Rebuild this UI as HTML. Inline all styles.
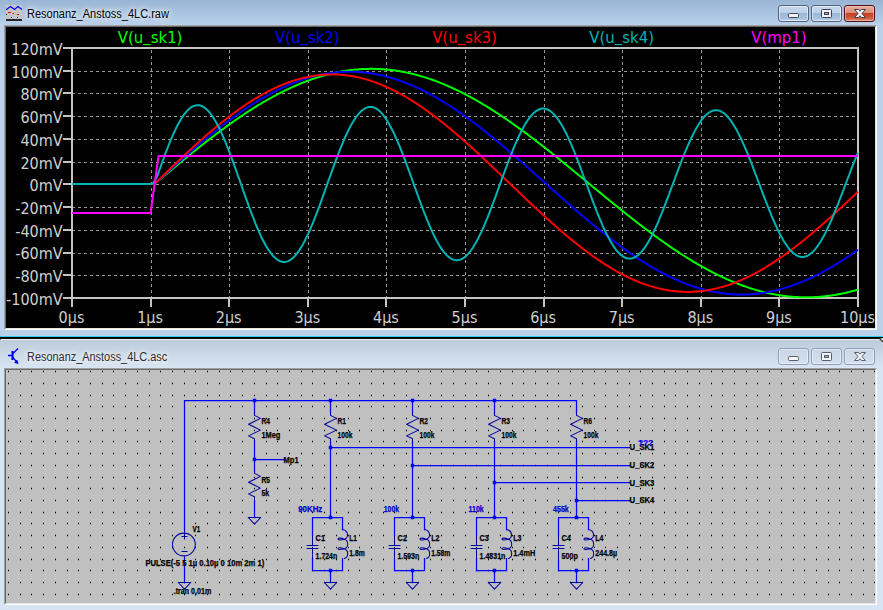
<!DOCTYPE html>
<html lang="de"><head><meta charset="utf-8"><title>LTspice</title>
<style>
html,body{margin:0;padding:0}
body{width:883px;height:610px;overflow:hidden;position:relative;background:#b9d1ea;font-family:"Liberation Sans",sans-serif}
.win{position:absolute;left:0;width:883px;overflow:hidden}
#w1{top:0;height:338px;background:#b9d1ea}
#w2{top:338px;height:272px;background:#d7e4f2}
.tb{position:absolute;left:0;top:0;width:883px}
#w1 .tb{height:25px;background:linear-gradient(#9ab5d5,#b9d1ea)}
#w2 .tb{top:0;height:30px;background:linear-gradient(#1a0a05 0,#1a0a05 1px,#e6edf7 1px,#e6edf7 2px,#bccbdb 2px,#d9e5f2 30px)}
.ttl{position:absolute;left:26.5px;font-size:12px;line-height:14px;color:#000;white-space:nowrap;text-shadow:0 0 5px #fff,0 0 8px #fff;transform:scaleX(.917);transform-origin:0 0}
.client{position:absolute;left:4px;width:869px;border-style:solid;border-width:2px;border-color:#a0a0a0 #fff #fff #a0a0a0}
.client i{position:absolute;left:0;top:0;right:0;bottom:0;border-style:solid;border-width:1px;border-color:#696969 #e3e3e3 #e3e3e3 #696969;margin:-1px}
.btn{position:absolute;width:29px;height:15px;border:1px solid #52627d;border-radius:3px;box-shadow:inset 0 0 0 1px rgba(255,255,255,.55)}
#w1 .btn{top:5px;background:linear-gradient(#c3d6ec 0,#bdd2ea 45%,#9cb7d6 50%,#a9c2df 85%,#bcd2eb 100%)}
#w1 .btn.cl{background:linear-gradient(#e9aa9b 0,#dd8f7c 45%,#c4411f 50%,#cf5a3c 80%,#dc8d74 100%);border-color:#4b0f1e;box-shadow:inset 0 0 0 1px rgba(255,220,210,.5)}
#w2 .btn{top:10px;border-color:#8e9fbe;background:linear-gradient(#c9d6e5,#d5e0ee);box-shadow:inset 0 0 0 1px rgba(255,255,255,.45)}
.b1{left:778px}.b2{left:811px}.b3{left:844px}
.btn svg{position:absolute;left:0;top:0}
svg text{white-space:pre}
</style></head><body>

<div class="win" id="w1"><div class="tb"></div>
<svg style="position:absolute;left:6px;top:5px" width="16" height="16" viewBox="0 0 16 16"><rect width="16" height="16" fill="#c6c6c6"/><path d="M0.5 4.5L4.5 1.5L8.5 4.5L12 1.5L16 4.5" fill="none" stroke="#0000ff" stroke-width="1.2"/><path d="M2 7.5h3M6.5 8.5h1.5M11 9.5h2" stroke="#ff0000" stroke-width="1.2"/><path d="M5 12.5h1M11 12.5h1" stroke="#000080" stroke-width="1.2"/><path d="M0 4.5h1M0 9.5h1" stroke="#000" /><path d="M0 15h16" stroke="#000" stroke-width="1.6"/></svg>
<div class="ttl" style="top:7px">Resonanz_Anstoss_4LC.raw</div>
<div class="btn b1"><svg width="29" height="15"><rect x="9.5" y="7.5" width="10" height="4" rx="1" fill="#f4f4f4" stroke="#3a3f55"/></svg></div>
<div class="btn b2"><svg width="29" height="15"><rect x="9.5" y="3.5" width="10" height="8" rx="1" fill="#f4f4f4" stroke="#3a3f55"/><rect x="12.5" y="6.5" width="4" height="2" fill="#9fb6d3" stroke="#3a3f55"/></svg></div>
<div class="btn b3 cl"><svg width="29" height="15"><path d="M9.5 3.500h4l1.500 1.700l1.500-1.700h4l-3.600 4l3.600 4h-4l-1.500-1.700l-1.500 1.700h-4l3.600-4z" fill="#f4f4f4" stroke="#3a3f55" stroke-width="1" stroke-linejoin="round"/></svg></div>
<div class="client" style="top:25px;height:301px;background:#000"><i></i></div>
<div style="position:absolute;left:0;top:336px;width:883px;height:1px;background:#2fd0ee"></div><div style="position:absolute;left:0;top:337px;width:883px;height:1px;background:#000"></div>
</div>
<div class="win" id="w2"><div class="tb"></div>
<svg style="position:absolute;left:7px;top:9px" width="14" height="18" viewBox="0 0 14 18"><path d="M1 8.5h4M5.5 4v9M5.5 7L11 1.500M5.500 10L11 16.500" fill="none" stroke="#0000ff" stroke-width="1.300"/><path d="M11 16.500L7.500 15.500L10 13z" fill="#0000ff" stroke="#0000ff" stroke-width=".6"/><path d="M5.500 4v9" stroke="#0000ff" stroke-width="2"/></svg>
<div class="ttl" style="top:12px;color:#2e2e2e;transform:scaleX(.91)">Resonanz_Anstoss_4LC.asc</div>
<div class="btn b1"><svg width="29" height="15"><rect x="9.5" y="7.5" width="10" height="4" rx="1" fill="#f4f4f4" stroke="#555d70"/></svg></div>
<div class="btn b2"><svg width="29" height="15"><rect x="9.5" y="3.5" width="10" height="8" rx="1" fill="#f4f4f4" stroke="#555d70"/><rect x="12.5" y="6.5" width="4" height="2" fill="#9fb6d3" stroke="#555d70"/></svg></div>
<div class="btn b3 cl"><svg width="29" height="15"><path d="M9.5 3.500h4l1.500 1.700l1.500-1.700h4l-3.600 4l3.600 4h-4l-1.500-1.700l-1.500 1.700h-4l3.600-4z" fill="#f4f4f4" stroke="#555d70" stroke-width="1" stroke-linejoin="round"/></svg></div>
<svg style="position:absolute;left:879px;top:0" width="4" height="5"><path d="M1.500 0H4V3.500z" fill="#c9d9ea"/><path d="M0.500 0.500L4 4" stroke="#4a4038" stroke-width="1.300" fill="none"/></svg><div style="position:absolute;left:0;top:1px;width:1px;height:1px;background:#7a7a7a"></div>
<div class="client" style="top:30px;height:233px;background:#c0c0c0"><i></i></div>
</div>
<svg style="position:absolute;left:0;top:0" width="883" height="338" viewBox="0 0 883 338" font-family="'DejaVu Sans Condensed','Liberation Sans',sans-serif">
<path d="M151.5 50V297M229.5 50V297M308.5 50V297M386.5 50V297M465.5 50V297M544.5 50V297M622.5 50V297M701.5 50V297M779.5 50V297M72 71.5H857M72 93.5H857M72 116.5H857M72 139.5H857M72 162.5H857M72 184.5H857M72 207.5H857M72 230.5H857M72 253.5H857M72 275.5H857" stroke="#989898" stroke-width="1" stroke-dasharray="3 3" fill="none" shape-rendering="crispEdges"/>
<rect x="72" y="48" width="786" height="250" fill="none" stroke="#c4c4c4" stroke-width="2" shape-rendering="crispEdges"/>
<path d="M63 48H72M63 71H72M63 93H72M63 116H72M63 139H72M63 162H72M63 184H72M63 207H72M63 230H72M63 253H72M63 275H72M63 298H72M72 298V307M151 298V307M229 298V307M308 298V307M386 298V307M465 298V307M544 298V307M622 298V307M701 298V307M779 298V307M858 298V307" stroke="#c4c4c4" stroke-width="2" fill="none" shape-rendering="crispEdges"/>
<g>
<polyline points="72.0,184.0 72.8,184.0 73.6,184.0 74.4,184.0 75.1,184.0 75.9,184.0 76.7,184.0 77.5,184.0 78.3,184.0 79.1,184.0 79.9,184.0 80.6,184.0 81.4,184.0 82.2,184.0 83.0,184.0 83.8,184.0 84.6,184.0 85.4,184.0 86.1,184.0 86.9,184.0 87.7,184.0 88.5,184.0 89.3,184.0 90.1,184.0 90.9,184.0 91.7,184.0 92.4,184.0 93.2,184.0 94.0,184.0 94.8,184.0 95.6,184.0 96.4,184.0 97.2,184.0 97.9,184.0 98.7,184.0 99.5,184.0 100.3,184.0 101.1,184.0 101.9,184.0 102.7,184.0 103.4,184.0 104.2,184.0 105.0,184.0 105.8,184.0 106.6,184.0 107.4,184.0 108.2,184.0 108.9,184.0 109.7,184.0 110.5,184.0 111.3,184.0 112.1,184.0 112.9,184.0 113.7,184.0 114.4,184.0 115.2,184.0 116.0,184.0 116.8,184.0 117.6,184.0 118.4,184.0 119.2,184.0 119.9,184.0 120.7,184.0 121.5,184.0 122.3,184.0 123.1,184.0 123.9,184.0 124.7,184.0 125.4,184.0 126.2,184.0 127.0,184.0 127.8,184.0 128.6,184.0 129.4,184.0 130.2,184.0 130.9,184.0 131.7,184.0 132.5,184.0 133.3,184.0 134.1,184.0 134.9,184.0 135.7,184.0 136.5,184.0 137.2,184.0 138.0,184.0 138.8,184.0 139.6,184.0 140.4,184.0 141.2,184.0 142.0,184.0 142.7,184.0 143.5,184.0 144.3,184.0 145.1,184.0 145.9,184.0 146.7,184.0 147.5,184.0 148.2,184.0 149.0,184.0 149.8,184.0 150.6,184.0 151.4,184.0 152.2,183.9 153.0,183.7 153.7,183.5 154.5,183.2 155.3,182.8 156.1,182.4 156.9,181.9 157.7,181.3 158.5,180.7 159.2,180.1 160.0,179.4 160.8,178.7 161.6,178.1 162.4,177.4 163.2,176.8 164.0,176.1 164.7,175.4 165.5,174.8 166.3,174.1 167.1,173.5 167.9,172.8 168.7,172.2 169.5,171.5 170.2,170.9 171.0,170.2 171.8,169.6 172.6,168.9 173.4,168.2 174.2,167.6 175.0,166.9 175.8,166.3 176.5,165.6 177.3,165.0 178.1,164.3 178.9,163.7 179.7,163.0 180.5,162.4 181.3,161.8 182.0,161.1 182.8,160.5 183.6,159.8 184.4,159.2 185.2,158.5 186.0,157.9 186.8,157.3 187.5,156.6 188.3,156.0 189.1,155.3 189.9,154.7 190.7,154.1 191.5,153.4 192.3,152.8 193.0,152.2 193.8,151.5 194.6,150.9 195.4,150.3 196.2,149.7 197.0,149.0 197.8,148.4 198.5,147.8 199.3,147.2 200.1,146.5 200.9,145.9 201.7,145.3 202.5,144.7 203.3,144.1 204.0,143.4 204.8,142.8 205.6,142.2 206.4,141.6 207.2,141.0 208.0,140.4 208.8,139.8 209.6,139.2 210.3,138.6 211.1,138.0 211.9,137.4 212.7,136.8 213.5,136.2 214.3,135.6 215.1,135.0 215.8,134.4 216.6,133.8 217.4,133.2 218.2,132.6 219.0,132.0 219.8,131.4 220.6,130.8 221.3,130.3 222.1,129.7 222.9,129.1 223.7,128.5 224.5,128.0 225.3,127.4 226.1,126.8 226.8,126.2 227.6,125.7 228.4,125.1 229.2,124.5 230.0,124.0 230.8,123.4 231.6,122.9 232.3,122.3 233.1,121.8 233.9,121.2 234.7,120.7 235.5,120.1 236.3,119.6 237.1,119.0 237.8,118.5 238.6,117.9 239.4,117.4 240.2,116.9 241.0,116.3 241.8,115.8 242.6,115.3 243.3,114.8 244.1,114.2 244.9,113.7 245.7,113.2 246.5,112.7 247.3,112.2 248.1,111.7 248.8,111.1 249.6,110.6 250.4,110.1 251.2,109.6 252.0,109.1 252.8,108.6 253.6,108.1 254.4,107.6 255.1,107.2 255.9,106.7 256.7,106.2 257.5,105.7 258.3,105.2 259.1,104.7 259.9,104.3 260.6,103.8 261.4,103.3 262.2,102.9 263.0,102.4 263.8,101.9 264.6,101.5 265.4,101.0 266.1,100.6 266.9,100.1 267.7,99.7 268.5,99.2 269.3,98.8 270.1,98.3 270.9,97.9 271.6,97.5 272.4,97.0 273.2,96.6 274.0,96.2 274.8,95.8 275.6,95.3 276.4,94.9 277.1,94.5 277.9,94.1 278.7,93.7 279.5,93.3 280.3,92.9 281.1,92.5 281.9,92.1 282.6,91.7 283.4,91.3 284.2,90.9 285.0,90.5 285.8,90.2 286.6,89.8 287.4,89.4 288.1,89.0 288.9,88.7 289.7,88.3 290.5,87.9 291.3,87.6 292.1,87.2 292.9,86.9 293.7,86.5 294.4,86.2 295.2,85.8 296.0,85.5 296.8,85.1 297.6,84.8 298.4,84.5 299.2,84.1 299.9,83.8 300.7,83.5 301.5,83.2 302.3,82.9 303.1,82.6 303.9,82.2 304.7,81.9 305.4,81.6 306.2,81.3 307.0,81.0 307.8,80.8 308.6,80.5 309.4,80.2 310.2,79.9 310.9,79.6 311.7,79.3 312.5,79.1 313.3,78.8 314.1,78.5 314.9,78.3 315.7,78.0 316.4,77.8 317.2,77.5 318.0,77.3 318.8,77.0 319.6,76.8 320.4,76.5 321.2,76.3 321.9,76.1 322.7,75.9 323.5,75.6 324.3,75.4 325.1,75.2 325.9,75.0 326.7,74.8 327.4,74.6 328.2,74.4 329.0,74.2 329.8,74.0 330.6,73.8 331.4,73.6 332.2,73.4 333.0,73.2 333.7,73.1 334.5,72.9 335.3,72.7 336.1,72.5 336.9,72.4 337.7,72.2 338.5,72.1 339.2,71.9 340.0,71.8 340.8,71.6 341.6,71.5 342.4,71.3 343.2,71.2 344.0,71.1 344.7,70.9 345.5,70.8 346.3,70.7 347.1,70.6 347.9,70.5 348.7,70.4 349.5,70.3 350.2,70.2 351.0,70.1 351.8,70.0 352.6,69.9 353.4,69.8 354.2,69.7 355.0,69.6 355.7,69.6 356.5,69.5 357.3,69.4 358.1,69.4 358.9,69.3 359.7,69.2 360.5,69.2 361.2,69.1 362.0,69.1 362.8,69.0 363.6,69.0 364.4,69.0 365.2,68.9 366.0,68.9 366.8,68.9 367.5,68.9 368.3,68.9 369.1,68.8 369.9,68.8 370.7,68.8 371.5,68.8 372.3,68.8 373.0,68.8 373.8,68.8 374.6,68.9 375.4,68.9 376.2,68.9 377.0,68.9 377.8,69.0 378.5,69.0 379.3,69.0 380.1,69.1 380.9,69.1 381.7,69.2 382.5,69.2 383.3,69.3 384.0,69.3 384.8,69.4 385.6,69.4 386.4,69.5 387.2,69.6 388.0,69.7 388.8,69.7 389.5,69.8 390.3,69.9 391.1,70.0 391.9,70.1 392.7,70.2 393.5,70.3 394.3,70.4 395.0,70.5 395.8,70.6 396.6,70.7 397.4,70.9 398.2,71.0 399.0,71.1 399.8,71.2 400.5,71.4 401.3,71.5 402.1,71.7 402.9,71.8 403.7,72.0 404.5,72.1 405.3,72.3 406.1,72.4 406.8,72.6 407.6,72.8 408.4,72.9 409.2,73.1 410.0,73.3 410.8,73.5 411.6,73.7 412.3,73.8 413.1,74.0 413.9,74.2 414.7,74.4 415.5,74.6 416.3,74.8 417.1,75.0 417.8,75.3 418.6,75.5 419.4,75.7 420.2,75.9 421.0,76.2 421.8,76.4 422.6,76.6 423.3,76.9 424.1,77.1 424.9,77.3 425.7,77.6 426.5,77.8 427.3,78.1 428.1,78.4 428.8,78.6 429.6,78.9 430.4,79.1 431.2,79.4 432.0,79.7 432.8,80.0 433.6,80.3 434.3,80.5 435.1,80.8 435.9,81.1 436.7,81.4 437.5,81.7 438.3,82.0 439.1,82.3 439.8,82.6 440.6,82.9 441.4,83.3 442.2,83.6 443.0,83.9 443.8,84.2 444.6,84.5 445.4,84.9 446.1,85.2 446.9,85.5 447.7,85.9 448.5,86.2 449.3,86.6 450.1,86.9 450.9,87.3 451.6,87.6 452.4,88.0 453.2,88.4 454.0,88.7 454.8,89.1 455.6,89.5 456.4,89.8 457.1,90.2 457.9,90.6 458.7,91.0 459.5,91.4 460.3,91.7 461.1,92.1 461.9,92.5 462.6,92.9 463.4,93.3 464.2,93.7 465.0,94.1 465.8,94.6 466.6,95.0 467.4,95.4 468.1,95.8 468.9,96.2 469.7,96.6 470.5,97.1 471.3,97.5 472.1,97.9 472.9,98.4 473.6,98.8 474.4,99.2 475.2,99.7 476.0,100.1 476.8,100.6 477.6,101.0 478.4,101.5 479.1,101.9 479.9,102.4 480.7,102.9 481.5,103.3 482.3,103.8 483.1,104.3 483.9,104.7 484.6,105.2 485.4,105.7 486.2,106.2 487.0,106.6 487.8,107.1 488.6,107.6 489.4,108.1 490.2,108.6 490.9,109.1 491.7,109.6 492.5,110.1 493.3,110.6 494.1,111.1 494.9,111.6 495.7,112.1 496.4,112.6 497.2,113.1 498.0,113.6 498.8,114.2 499.6,114.7 500.4,115.2 501.2,115.7 501.9,116.2 502.7,116.8 503.5,117.3 504.3,117.8 505.1,118.4 505.9,118.9 506.7,119.4 507.4,120.0 508.2,120.5 509.0,121.1 509.8,121.6 510.6,122.2 511.4,122.7 512.2,123.3 512.9,123.8 513.7,124.4 514.5,124.9 515.3,125.5 516.1,126.1 516.9,126.6 517.7,127.2 518.4,127.8 519.2,128.3 520.0,128.9 520.8,129.5 521.6,130.0 522.4,130.6 523.2,131.2 524.0,131.8 524.7,132.4 525.5,132.9 526.3,133.5 527.1,134.1 527.9,134.7 528.7,135.3 529.5,135.9 530.2,136.5 531.0,137.1 531.8,137.6 532.6,138.2 533.4,138.8 534.2,139.4 535.0,140.0 535.7,140.6 536.5,141.2 537.3,141.9 538.1,142.5 538.9,143.1 539.7,143.7 540.5,144.3 541.2,144.9 542.0,145.5 542.8,146.1 543.6,146.7 544.4,147.4 545.2,148.0 546.0,148.6 546.7,149.2 547.5,149.8 548.3,150.4 549.1,151.1 549.9,151.7 550.7,152.3 551.5,152.9 552.2,153.6 553.0,154.2 553.8,154.8 554.6,155.5 555.4,156.1 556.2,156.7 557.0,157.4 557.7,158.0 558.5,158.6 559.3,159.3 560.1,159.9 560.9,160.5 561.7,161.2 562.5,161.8 563.2,162.4 564.0,163.1 564.8,163.7 565.6,164.4 566.4,165.0 567.2,165.6 568.0,166.3 568.8,166.9 569.5,167.6 570.3,168.2 571.1,168.8 571.9,169.5 572.7,170.1 573.5,170.8 574.3,171.4 575.0,172.1 575.8,172.7 576.6,173.4 577.4,174.0 578.2,174.7 579.0,175.3 579.8,175.9 580.5,176.6 581.3,177.2 582.1,177.9 582.9,178.5 583.7,179.2 584.5,179.8 585.3,180.5 586.0,181.1 586.8,181.8 587.6,182.4 588.4,183.1 589.2,183.7 590.0,184.4 590.8,185.0 591.5,185.7 592.3,186.3 593.1,187.0 593.9,187.6 594.7,188.3 595.5,188.9 596.3,189.6 597.0,190.2 597.8,190.9 598.6,191.5 599.4,192.1 600.2,192.8 601.0,193.4 601.8,194.1 602.5,194.7 603.3,195.4 604.1,196.0 604.9,196.7 605.7,197.3 606.5,198.0 607.3,198.6 608.1,199.2 608.8,199.9 609.6,200.5 610.4,201.2 611.2,201.8 612.0,202.4 612.8,203.1 613.6,203.7 614.3,204.4 615.1,205.0 615.9,205.6 616.7,206.3 617.5,206.9 618.3,207.5 619.1,208.2 619.8,208.8 620.6,209.4 621.4,210.1 622.2,210.7 623.0,211.3 623.8,211.9 624.6,212.6 625.3,213.2 626.1,213.8 626.9,214.4 627.7,215.1 628.5,215.7 629.3,216.3 630.1,216.9 630.8,217.5 631.6,218.2 632.4,218.8 633.2,219.4 634.0,220.0 634.8,220.6 635.6,221.2 636.3,221.8 637.1,222.5 637.9,223.1 638.7,223.7 639.5,224.3 640.3,224.9 641.1,225.5 641.9,226.1 642.6,226.7 643.4,227.3 644.2,227.9 645.0,228.5 645.8,229.1 646.6,229.7 647.4,230.2 648.1,230.8 648.9,231.4 649.7,232.0 650.5,232.6 651.3,233.2 652.1,233.8 652.9,234.3 653.6,234.9 654.4,235.5 655.2,236.1 656.0,236.6 656.8,237.2 657.6,237.8 658.4,238.4 659.1,238.9 659.9,239.5 660.7,240.0 661.5,240.6 662.3,241.2 663.1,241.7 663.9,242.3 664.6,242.8 665.4,243.4 666.2,243.9 667.0,244.5 667.8,245.0 668.6,245.6 669.4,246.1 670.1,246.6 670.9,247.2 671.7,247.7 672.5,248.3 673.3,248.8 674.1,249.3 674.9,249.8 675.6,250.4 676.4,250.9 677.2,251.4 678.0,251.9 678.8,252.4 679.6,253.0 680.4,253.5 681.1,254.0 681.9,254.5 682.7,255.0 683.5,255.5 684.3,256.0 685.1,256.5 685.9,257.0 686.7,257.5 687.4,258.0 688.2,258.4 689.0,258.9 689.8,259.4 690.6,259.9 691.4,260.4 692.2,260.9 692.9,261.3 693.7,261.8 694.5,262.3 695.3,262.7 696.1,263.2 696.9,263.7 697.7,264.1 698.4,264.6 699.2,265.0 700.0,265.5 700.8,265.9 701.6,266.4 702.4,266.8 703.2,267.2 703.9,267.7 704.7,268.1 705.5,268.5 706.3,269.0 707.1,269.4 707.9,269.8 708.7,270.2 709.4,270.7 710.2,271.1 711.0,271.5 711.8,271.9 712.6,272.3 713.4,272.7 714.2,273.1 714.9,273.5 715.7,273.9 716.5,274.3 717.3,274.7 718.1,275.1 718.9,275.4 719.7,275.8 720.5,276.2 721.2,276.6 722.0,276.9 722.8,277.3 723.6,277.7 724.4,278.0 725.2,278.4 726.0,278.7 726.7,279.1 727.5,279.4 728.3,279.8 729.1,280.1 729.9,280.5 730.7,280.8 731.5,281.1 732.2,281.5 733.0,281.8 733.8,282.1 734.6,282.5 735.4,282.8 736.2,283.1 737.0,283.4 737.7,283.7 738.5,284.0 739.3,284.3 740.1,284.6 740.9,284.9 741.7,285.2 742.5,285.5 743.2,285.8 744.0,286.1 744.8,286.3 745.6,286.6 746.4,286.9 747.2,287.1 748.0,287.4 748.7,287.7 749.5,287.9 750.3,288.2 751.1,288.4 751.9,288.7 752.7,288.9 753.5,289.2 754.2,289.4 755.0,289.6 755.8,289.9 756.6,290.1 757.4,290.3 758.2,290.6 759.0,290.8 759.8,291.0 760.5,291.2 761.3,291.4 762.1,291.6 762.9,291.8 763.7,292.0 764.5,292.2 765.3,292.4 766.0,292.6 766.8,292.8 767.6,292.9 768.4,293.1 769.2,293.3 770.0,293.5 770.8,293.6 771.5,293.8 772.3,293.9 773.1,294.1 773.9,294.2 774.7,294.4 775.5,294.5 776.3,294.7 777.0,294.8 777.8,295.0 778.6,295.1 779.4,295.2 780.2,295.3 781.0,295.4 781.8,295.6 782.5,295.7 783.3,295.8 784.1,295.9 784.9,296.0 785.7,296.1 786.5,296.2 787.3,296.3 788.0,296.4 788.8,296.4 789.6,296.5 790.4,296.6 791.2,296.7 792.0,296.7 792.8,296.8 793.5,296.9 794.3,296.9 795.1,297.0 795.9,297.0 796.7,297.1 797.5,297.1 798.3,297.2 799.0,297.2 799.8,297.2 800.6,297.2 801.4,297.3 802.2,297.3 803.0,297.3 803.8,297.3 804.6,297.3 805.3,297.3 806.1,297.3 806.9,297.3 807.7,297.3 808.5,297.3 809.3,297.3 810.1,297.3 810.8,297.3 811.6,297.3 812.4,297.2 813.2,297.2 814.0,297.2 814.8,297.1 815.6,297.1 816.3,297.0 817.1,297.0 817.9,296.9 818.7,296.9 819.5,296.8 820.3,296.8 821.1,296.7 821.8,296.6 822.6,296.6 823.4,296.5 824.2,296.4 825.0,296.3 825.8,296.2 826.6,296.1 827.3,296.0 828.1,295.9 828.9,295.8 829.7,295.7 830.5,295.6 831.3,295.5 832.1,295.4 832.8,295.3 833.6,295.1 834.4,295.0 835.2,294.9 836.0,294.8 836.8,294.6 837.6,294.5 838.4,294.3 839.1,294.2 839.9,294.0 840.7,293.9 841.5,293.7 842.3,293.5 843.1,293.4 843.9,293.2 844.6,293.0 845.4,292.9 846.2,292.7 847.0,292.5 847.8,292.3 848.6,292.1 849.4,291.9 850.1,291.7 850.9,291.5 851.7,291.3 852.5,291.1 853.3,290.9 854.1,290.7 854.9,290.5 855.6,290.2 856.4,290.0 857.2,289.8 858.0,289.5" fill="none" stroke="#00ff00" stroke-width="2" stroke-linejoin="round"/>
<polyline points="72.0,184.0 72.8,184.0 73.6,184.0 74.4,184.0 75.1,184.0 75.9,184.0 76.7,184.0 77.5,184.0 78.3,184.0 79.1,184.0 79.9,184.0 80.6,184.0 81.4,184.0 82.2,184.0 83.0,184.0 83.8,184.0 84.6,184.0 85.4,184.0 86.1,184.0 86.9,184.0 87.7,184.0 88.5,184.0 89.3,184.0 90.1,184.0 90.9,184.0 91.7,184.0 92.4,184.0 93.2,184.0 94.0,184.0 94.8,184.0 95.6,184.0 96.4,184.0 97.2,184.0 97.9,184.0 98.7,184.0 99.5,184.0 100.3,184.0 101.1,184.0 101.9,184.0 102.7,184.0 103.4,184.0 104.2,184.0 105.0,184.0 105.8,184.0 106.6,184.0 107.4,184.0 108.2,184.0 108.9,184.0 109.7,184.0 110.5,184.0 111.3,184.0 112.1,184.0 112.9,184.0 113.7,184.0 114.4,184.0 115.2,184.0 116.0,184.0 116.8,184.0 117.6,184.0 118.4,184.0 119.2,184.0 119.9,184.0 120.7,184.0 121.5,184.0 122.3,184.0 123.1,184.0 123.9,184.0 124.7,184.0 125.4,184.0 126.2,184.0 127.0,184.0 127.8,184.0 128.6,184.0 129.4,184.0 130.2,184.0 130.9,184.0 131.7,184.0 132.5,184.0 133.3,184.0 134.1,184.0 134.9,184.0 135.7,184.0 136.5,184.0 137.2,184.0 138.0,184.0 138.8,184.0 139.6,184.0 140.4,184.0 141.2,184.0 142.0,184.0 142.7,184.0 143.5,184.0 144.3,184.0 145.1,184.0 145.9,184.0 146.7,184.0 147.5,184.0 148.2,184.0 149.0,184.0 149.8,184.0 150.6,184.0 151.4,184.0 152.2,183.9 153.0,183.7 153.7,183.4 154.5,183.1 155.3,182.7 156.1,182.3 156.9,181.7 157.7,181.1 158.5,180.4 159.2,179.7 160.0,179.0 160.8,178.3 161.6,177.6 162.4,176.9 163.2,176.2 164.0,175.5 164.7,174.7 165.5,174.0 166.3,173.3 167.1,172.6 167.9,171.9 168.7,171.2 169.5,170.5 170.2,169.8 171.0,169.1 171.8,168.4 172.6,167.7 173.4,167.0 174.2,166.3 175.0,165.6 175.8,164.9 176.5,164.2 177.3,163.5 178.1,162.8 178.9,162.1 179.7,161.4 180.5,160.7 181.3,160.0 182.0,159.3 182.8,158.6 183.6,157.9 184.4,157.2 185.2,156.5 186.0,155.8 186.8,155.1 187.5,154.4 188.3,153.7 189.1,153.1 189.9,152.4 190.7,151.7 191.5,151.0 192.3,150.3 193.0,149.7 193.8,149.0 194.6,148.3 195.4,147.6 196.2,147.0 197.0,146.3 197.8,145.6 198.5,145.0 199.3,144.3 200.1,143.6 200.9,143.0 201.7,142.3 202.5,141.6 203.3,141.0 204.0,140.3 204.8,139.7 205.6,139.0 206.4,138.4 207.2,137.7 208.0,137.1 208.8,136.4 209.6,135.8 210.3,135.1 211.1,134.5 211.9,133.9 212.7,133.2 213.5,132.6 214.3,132.0 215.1,131.3 215.8,130.7 216.6,130.1 217.4,129.5 218.2,128.8 219.0,128.2 219.8,127.6 220.6,127.0 221.3,126.4 222.1,125.8 222.9,125.2 223.7,124.6 224.5,124.0 225.3,123.4 226.1,122.8 226.8,122.2 227.6,121.6 228.4,121.0 229.2,120.4 230.0,119.8 230.8,119.2 231.6,118.7 232.3,118.1 233.1,117.5 233.9,116.9 234.7,116.4 235.5,115.8 236.3,115.3 237.1,114.7 237.8,114.1 238.6,113.6 239.4,113.0 240.2,112.5 241.0,111.9 241.8,111.4 242.6,110.9 243.3,110.3 244.1,109.8 244.9,109.2 245.7,108.7 246.5,108.2 247.3,107.7 248.1,107.2 248.8,106.6 249.6,106.1 250.4,105.6 251.2,105.1 252.0,104.6 252.8,104.1 253.6,103.6 254.4,103.1 255.1,102.6 255.9,102.1 256.7,101.7 257.5,101.2 258.3,100.7 259.1,100.2 259.9,99.8 260.6,99.3 261.4,98.8 262.2,98.4 263.0,97.9 263.8,97.4 264.6,97.0 265.4,96.6 266.1,96.1 266.9,95.7 267.7,95.2 268.5,94.8 269.3,94.4 270.1,93.9 270.9,93.5 271.6,93.1 272.4,92.7 273.2,92.3 274.0,91.9 274.8,91.5 275.6,91.1 276.4,90.7 277.1,90.3 277.9,89.9 278.7,89.5 279.5,89.1 280.3,88.8 281.1,88.4 281.9,88.0 282.6,87.6 283.4,87.3 284.2,86.9 285.0,86.6 285.8,86.2 286.6,85.9 287.4,85.5 288.1,85.2 288.9,84.9 289.7,84.5 290.5,84.2 291.3,83.9 292.1,83.6 292.9,83.2 293.7,82.9 294.4,82.6 295.2,82.3 296.0,82.0 296.8,81.7 297.6,81.4 298.4,81.2 299.2,80.9 299.9,80.6 300.7,80.3 301.5,80.0 302.3,79.8 303.1,79.5 303.9,79.3 304.7,79.0 305.4,78.8 306.2,78.5 307.0,78.3 307.8,78.0 308.6,77.8 309.4,77.6 310.2,77.4 310.9,77.1 311.7,76.9 312.5,76.7 313.3,76.5 314.1,76.3 314.9,76.1 315.7,75.9 316.4,75.7 317.2,75.5 318.0,75.4 318.8,75.2 319.6,75.0 320.4,74.8 321.2,74.7 321.9,74.5 322.7,74.4 323.5,74.2 324.3,74.1 325.1,73.9 325.9,73.8 326.7,73.7 327.4,73.5 328.2,73.4 329.0,73.3 329.8,73.2 330.6,73.1 331.4,73.0 332.2,72.8 333.0,72.8 333.7,72.7 334.5,72.6 335.3,72.5 336.1,72.4 336.9,72.3 337.7,72.3 338.5,72.2 339.2,72.1 340.0,72.1 340.8,72.0 341.6,72.0 342.4,71.9 343.2,71.9 344.0,71.9 344.7,71.8 345.5,71.8 346.3,71.8 347.1,71.8 347.9,71.7 348.7,71.7 349.5,71.7 350.2,71.7 351.0,71.7 351.8,71.7 352.6,71.8 353.4,71.8 354.2,71.8 355.0,71.8 355.7,71.9 356.5,71.9 357.3,71.9 358.1,72.0 358.9,72.0 359.7,72.1 360.5,72.1 361.2,72.2 362.0,72.3 362.8,72.3 363.6,72.4 364.4,72.5 365.2,72.6 366.0,72.7 366.8,72.8 367.5,72.9 368.3,73.0 369.1,73.1 369.9,73.2 370.7,73.3 371.5,73.4 372.3,73.5 373.0,73.7 373.8,73.8 374.6,73.9 375.4,74.1 376.2,74.2 377.0,74.4 377.8,74.5 378.5,74.7 379.3,74.9 380.1,75.0 380.9,75.2 381.7,75.4 382.5,75.6 383.3,75.7 384.0,75.9 384.8,76.1 385.6,76.3 386.4,76.5 387.2,76.7 388.0,76.9 388.8,77.2 389.5,77.4 390.3,77.6 391.1,77.8 391.9,78.1 392.7,78.3 393.5,78.5 394.3,78.8 395.0,79.0 395.8,79.3 396.6,79.5 397.4,79.8 398.2,80.1 399.0,80.3 399.8,80.6 400.5,80.9 401.3,81.2 402.1,81.5 402.9,81.7 403.7,82.0 404.5,82.3 405.3,82.6 406.1,82.9 406.8,83.3 407.6,83.6 408.4,83.9 409.2,84.2 410.0,84.5 410.8,84.9 411.6,85.2 412.3,85.5 413.1,85.9 413.9,86.2 414.7,86.6 415.5,86.9 416.3,87.3 417.1,87.6 417.8,88.0 418.6,88.4 419.4,88.7 420.2,89.1 421.0,89.5 421.8,89.9 422.6,90.3 423.3,90.7 424.1,91.1 424.9,91.5 425.7,91.9 426.5,92.3 427.3,92.7 428.1,93.1 428.8,93.5 429.6,93.9 430.4,94.3 431.2,94.8 432.0,95.2 432.8,95.6 433.6,96.1 434.3,96.5 435.1,97.0 435.9,97.4 436.7,97.9 437.5,98.3 438.3,98.8 439.1,99.2 439.8,99.7 440.6,100.2 441.4,100.6 442.2,101.1 443.0,101.6 443.8,102.1 444.6,102.6 445.4,103.0 446.1,103.5 446.9,104.0 447.7,104.5 448.5,105.0 449.3,105.5 450.1,106.0 450.9,106.5 451.6,107.0 452.4,107.6 453.2,108.1 454.0,108.6 454.8,109.1 455.6,109.7 456.4,110.2 457.1,110.7 457.9,111.3 458.7,111.8 459.5,112.3 460.3,112.9 461.1,113.4 461.9,114.0 462.6,114.5 463.4,115.1 464.2,115.6 465.0,116.2 465.8,116.8 466.6,117.3 467.4,117.9 468.1,118.5 468.9,119.0 469.7,119.6 470.5,120.2 471.3,120.8 472.1,121.4 472.9,122.0 473.6,122.5 474.4,123.1 475.2,123.7 476.0,124.3 476.8,124.9 477.6,125.5 478.4,126.1 479.1,126.7 479.9,127.3 480.7,127.9 481.5,128.6 482.3,129.2 483.1,129.8 483.9,130.4 484.6,131.0 485.4,131.6 486.2,132.3 487.0,132.9 487.8,133.5 488.6,134.2 489.4,134.8 490.2,135.4 490.9,136.1 491.7,136.7 492.5,137.3 493.3,138.0 494.1,138.6 494.9,139.3 495.7,139.9 496.4,140.6 497.2,141.2 498.0,141.9 498.8,142.5 499.6,143.2 500.4,143.8 501.2,144.5 501.9,145.2 502.7,145.8 503.5,146.5 504.3,147.1 505.1,147.8 505.9,148.5 506.7,149.1 507.4,149.8 508.2,150.5 509.0,151.2 509.8,151.8 510.6,152.5 511.4,153.2 512.2,153.9 512.9,154.5 513.7,155.2 514.5,155.9 515.3,156.6 516.1,157.3 516.9,157.9 517.7,158.6 518.4,159.3 519.2,160.0 520.0,160.7 520.8,161.4 521.6,162.1 522.4,162.8 523.2,163.4 524.0,164.1 524.7,164.8 525.5,165.5 526.3,166.2 527.1,166.9 527.9,167.6 528.7,168.3 529.5,169.0 530.2,169.7 531.0,170.4 531.8,171.1 532.6,171.8 533.4,172.5 534.2,173.2 535.0,173.9 535.7,174.6 536.5,175.3 537.3,176.0 538.1,176.7 538.9,177.4 539.7,178.1 540.5,178.8 541.2,179.5 542.0,180.2 542.8,180.9 543.6,181.6 544.4,182.3 545.2,183.0 546.0,183.7 546.7,184.4 547.5,185.1 548.3,185.8 549.1,186.5 549.9,187.2 550.7,187.9 551.5,188.6 552.2,189.3 553.0,190.0 553.8,190.7 554.6,191.4 555.4,192.1 556.2,192.8 557.0,193.5 557.7,194.2 558.5,194.9 559.3,195.6 560.1,196.3 560.9,197.0 561.7,197.7 562.5,198.4 563.2,199.1 564.0,199.8 564.8,200.5 565.6,201.2 566.4,201.9 567.2,202.6 568.0,203.3 568.8,203.9 569.5,204.6 570.3,205.3 571.1,206.0 571.9,206.7 572.7,207.4 573.5,208.1 574.3,208.8 575.0,209.4 575.8,210.1 576.6,210.8 577.4,211.5 578.2,212.2 579.0,212.8 579.8,213.5 580.5,214.2 581.3,214.9 582.1,215.5 582.9,216.2 583.7,216.9 584.5,217.5 585.3,218.2 586.0,218.9 586.8,219.5 587.6,220.2 588.4,220.9 589.2,221.5 590.0,222.2 590.8,222.8 591.5,223.5 592.3,224.1 593.1,224.8 593.9,225.4 594.7,226.1 595.5,226.7 596.3,227.4 597.0,228.0 597.8,228.7 598.6,229.3 599.4,229.9 600.2,230.6 601.0,231.2 601.8,231.8 602.5,232.5 603.3,233.1 604.1,233.7 604.9,234.3 605.7,235.0 606.5,235.6 607.3,236.2 608.1,236.8 608.8,237.4 609.6,238.0 610.4,238.7 611.2,239.3 612.0,239.9 612.8,240.5 613.6,241.1 614.3,241.7 615.1,242.3 615.9,242.9 616.7,243.4 617.5,244.0 618.3,244.6 619.1,245.2 619.8,245.8 620.6,246.4 621.4,246.9 622.2,247.5 623.0,248.1 623.8,248.7 624.6,249.2 625.3,249.8 626.1,250.3 626.9,250.9 627.7,251.5 628.5,252.0 629.3,252.6 630.1,253.1 630.8,253.7 631.6,254.2 632.4,254.7 633.2,255.3 634.0,255.8 634.8,256.3 635.6,256.9 636.3,257.4 637.1,257.9 637.9,258.4 638.7,258.9 639.5,259.4 640.3,260.0 641.1,260.5 641.9,261.0 642.6,261.5 643.4,262.0 644.2,262.5 645.0,262.9 645.8,263.4 646.6,263.9 647.4,264.4 648.1,264.9 648.9,265.4 649.7,265.8 650.5,266.3 651.3,266.8 652.1,267.2 652.9,267.7 653.6,268.1 654.4,268.6 655.2,269.0 656.0,269.5 656.8,269.9 657.6,270.4 658.4,270.8 659.1,271.2 659.9,271.6 660.7,272.1 661.5,272.5 662.3,272.9 663.1,273.3 663.9,273.7 664.6,274.1 665.4,274.5 666.2,274.9 667.0,275.3 667.8,275.7 668.6,276.1 669.4,276.5 670.1,276.9 670.9,277.3 671.7,277.6 672.5,278.0 673.3,278.4 674.1,278.7 674.9,279.1 675.6,279.4 676.4,279.8 677.2,280.1 678.0,280.5 678.8,280.8 679.6,281.1 680.4,281.5 681.1,281.8 681.9,282.1 682.7,282.4 683.5,282.8 684.3,283.1 685.1,283.4 685.9,283.7 686.7,284.0 687.4,284.3 688.2,284.6 689.0,284.9 689.8,285.1 690.6,285.4 691.4,285.7 692.2,286.0 692.9,286.2 693.7,286.5 694.5,286.8 695.3,287.0 696.1,287.3 696.9,287.5 697.7,287.8 698.4,288.0 699.2,288.2 700.0,288.5 700.8,288.7 701.6,288.9 702.4,289.1 703.2,289.3 703.9,289.5 704.7,289.7 705.5,290.0 706.3,290.1 707.1,290.3 707.9,290.5 708.7,290.7 709.4,290.9 710.2,291.1 711.0,291.2 711.8,291.4 712.6,291.6 713.4,291.7 714.2,291.9 714.9,292.0 715.7,292.2 716.5,292.3 717.3,292.5 718.1,292.6 718.9,292.7 719.7,292.8 720.5,293.0 721.2,293.1 722.0,293.2 722.8,293.3 723.6,293.4 724.4,293.5 725.2,293.6 726.0,293.7 726.7,293.8 727.5,293.8 728.3,293.9 729.1,294.0 729.9,294.1 730.7,294.1 731.5,294.2 732.2,294.2 733.0,294.3 733.8,294.3 734.6,294.4 735.4,294.4 736.2,294.4 737.0,294.5 737.7,294.5 738.5,294.5 739.3,294.5 740.1,294.5 740.9,294.5 741.7,294.5 742.5,294.5 743.2,294.5 744.0,294.5 744.8,294.5 745.6,294.5 746.4,294.5 747.2,294.4 748.0,294.4 748.7,294.4 749.5,294.3 750.3,294.3 751.1,294.2 751.9,294.2 752.7,294.1 753.5,294.0 754.2,294.0 755.0,293.9 755.8,293.8 756.6,293.7 757.4,293.6 758.2,293.6 759.0,293.5 759.8,293.4 760.5,293.3 761.3,293.1 762.1,293.0 762.9,292.9 763.7,292.8 764.5,292.7 765.3,292.5 766.0,292.4 766.8,292.3 767.6,292.1 768.4,292.0 769.2,291.8 770.0,291.7 770.8,291.5 771.5,291.4 772.3,291.2 773.1,291.0 773.9,290.8 774.7,290.7 775.5,290.5 776.3,290.3 777.0,290.1 777.8,289.9 778.6,289.7 779.4,289.5 780.2,289.3 781.0,289.1 781.8,288.8 782.5,288.6 783.3,288.4 784.1,288.2 784.9,287.9 785.7,287.7 786.5,287.4 787.3,287.2 788.0,286.9 788.8,286.7 789.6,286.4 790.4,286.2 791.2,285.9 792.0,285.6 792.8,285.4 793.5,285.1 794.3,284.8 795.1,284.5 795.9,284.2 796.7,283.9 797.5,283.6 798.3,283.3 799.0,283.0 799.8,282.7 800.6,282.4 801.4,282.1 802.2,281.7 803.0,281.4 803.8,281.1 804.6,280.7 805.3,280.4 806.1,280.1 806.9,279.7 807.7,279.4 808.5,279.0 809.3,278.7 810.1,278.3 810.8,277.9 811.6,277.6 812.4,277.2 813.2,276.8 814.0,276.4 814.8,276.1 815.6,275.7 816.3,275.3 817.1,274.9 817.9,274.5 818.7,274.1 819.5,273.7 820.3,273.3 821.1,272.9 821.8,272.4 822.6,272.0 823.4,271.6 824.2,271.2 825.0,270.7 825.8,270.3 826.6,269.9 827.3,269.4 828.1,269.0 828.9,268.6 829.7,268.1 830.5,267.7 831.3,267.2 832.1,266.7 832.8,266.3 833.6,265.8 834.4,265.3 835.2,264.9 836.0,264.4 836.8,263.9 837.6,263.4 838.4,262.9 839.1,262.5 839.9,262.0 840.7,261.5 841.5,261.0 842.3,260.5 843.1,260.0 843.9,259.5 844.6,259.0 845.4,258.4 846.2,257.9 847.0,257.4 847.8,256.9 848.6,256.4 849.4,255.8 850.1,255.3 850.9,254.8 851.7,254.2 852.5,253.7 853.3,253.2 854.1,252.6 854.9,252.1 855.6,251.5 856.4,251.0 857.2,250.4 858.0,249.9" fill="none" stroke="#0000ff" stroke-width="2" stroke-linejoin="round"/>
<polyline points="72.0,184.0 72.8,184.0 73.6,184.0 74.4,184.0 75.1,184.0 75.9,184.0 76.7,184.0 77.5,184.0 78.3,184.0 79.1,184.0 79.9,184.0 80.6,184.0 81.4,184.0 82.2,184.0 83.0,184.0 83.8,184.0 84.6,184.0 85.4,184.0 86.1,184.0 86.9,184.0 87.7,184.0 88.5,184.0 89.3,184.0 90.1,184.0 90.9,184.0 91.7,184.0 92.4,184.0 93.2,184.0 94.0,184.0 94.8,184.0 95.6,184.0 96.4,184.0 97.2,184.0 97.9,184.0 98.7,184.0 99.5,184.0 100.3,184.0 101.1,184.0 101.9,184.0 102.7,184.0 103.4,184.0 104.2,184.0 105.0,184.0 105.8,184.0 106.6,184.0 107.4,184.0 108.2,184.0 108.9,184.0 109.7,184.0 110.5,184.0 111.3,184.0 112.1,184.0 112.9,184.0 113.7,184.0 114.4,184.0 115.2,184.0 116.0,184.0 116.8,184.0 117.6,184.0 118.4,184.0 119.2,184.0 119.9,184.0 120.7,184.0 121.5,184.0 122.3,184.0 123.1,184.0 123.9,184.0 124.7,184.0 125.4,184.0 126.2,184.0 127.0,184.0 127.8,184.0 128.6,184.0 129.4,184.0 130.2,184.0 130.9,184.0 131.7,184.0 132.5,184.0 133.3,184.0 134.1,184.0 134.9,184.0 135.7,184.0 136.5,184.0 137.2,184.0 138.0,184.0 138.8,184.0 139.6,184.0 140.4,184.0 141.2,184.0 142.0,184.0 142.7,184.0 143.5,184.0 144.3,184.0 145.1,184.0 145.9,184.0 146.7,184.0 147.5,184.0 148.2,184.0 149.0,184.0 149.8,184.0 150.6,184.0 151.4,184.0 152.2,183.9 153.0,183.7 153.7,183.4 154.5,183.0 155.3,182.6 156.1,182.1 156.9,181.6 157.7,180.9 158.5,180.2 159.2,179.4 160.0,178.6 160.8,177.9 161.6,177.1 162.4,176.4 163.2,175.6 164.0,174.8 164.7,174.1 165.5,173.3 166.3,172.5 167.1,171.8 167.9,171.0 168.7,170.3 169.5,169.5 170.2,168.7 171.0,168.0 171.8,167.2 172.6,166.5 173.4,165.7 174.2,165.0 175.0,164.2 175.8,163.5 176.5,162.7 177.3,162.0 178.1,161.2 178.9,160.5 179.7,159.7 180.5,159.0 181.3,158.2 182.0,157.5 182.8,156.7 183.6,156.0 184.4,155.3 185.2,154.5 186.0,153.8 186.8,153.1 187.5,152.3 188.3,151.6 189.1,150.9 189.9,150.1 190.7,149.4 191.5,148.7 192.3,148.0 193.0,147.2 193.8,146.5 194.6,145.8 195.4,145.1 196.2,144.4 197.0,143.7 197.8,143.0 198.5,142.3 199.3,141.6 200.1,140.8 200.9,140.1 201.7,139.4 202.5,138.8 203.3,138.1 204.0,137.4 204.8,136.7 205.6,136.0 206.4,135.3 207.2,134.6 208.0,133.9 208.8,133.3 209.6,132.6 210.3,131.9 211.1,131.2 211.9,130.6 212.7,129.9 213.5,129.2 214.3,128.6 215.1,127.9 215.8,127.3 216.6,126.6 217.4,126.0 218.2,125.3 219.0,124.7 219.8,124.0 220.6,123.4 221.3,122.8 222.1,122.1 222.9,121.5 223.7,120.9 224.5,120.3 225.3,119.7 226.1,119.0 226.8,118.4 227.6,117.8 228.4,117.2 229.2,116.6 230.0,116.0 230.8,115.4 231.6,114.8 232.3,114.2 233.1,113.6 233.9,113.1 234.7,112.5 235.5,111.9 236.3,111.3 237.1,110.8 237.8,110.2 238.6,109.6 239.4,109.1 240.2,108.5 241.0,108.0 241.8,107.4 242.6,106.9 243.3,106.3 244.1,105.8 244.9,105.3 245.7,104.7 246.5,104.2 247.3,103.7 248.1,103.2 248.8,102.7 249.6,102.2 250.4,101.7 251.2,101.2 252.0,100.7 252.8,100.2 253.6,99.7 254.4,99.2 255.1,98.7 255.9,98.2 256.7,97.8 257.5,97.3 258.3,96.8 259.1,96.4 259.9,95.9 260.6,95.5 261.4,95.0 262.2,94.6 263.0,94.1 263.8,93.7 264.6,93.3 265.4,92.9 266.1,92.4 266.9,92.0 267.7,91.6 268.5,91.2 269.3,90.8 270.1,90.4 270.9,90.0 271.6,89.6 272.4,89.2 273.2,88.9 274.0,88.5 274.8,88.1 275.6,87.7 276.4,87.4 277.1,87.0 277.9,86.7 278.7,86.3 279.5,86.0 280.3,85.6 281.1,85.3 281.9,85.0 282.6,84.7 283.4,84.3 284.2,84.0 285.0,83.7 285.8,83.4 286.6,83.1 287.4,82.8 288.1,82.5 288.9,82.2 289.7,82.0 290.5,81.7 291.3,81.4 292.1,81.2 292.9,80.9 293.7,80.6 294.4,80.4 295.2,80.2 296.0,79.9 296.8,79.7 297.6,79.4 298.4,79.2 299.2,79.0 299.9,78.8 300.7,78.6 301.5,78.4 302.3,78.2 303.1,78.0 303.9,77.8 304.7,77.6 305.4,77.4 306.2,77.3 307.0,77.1 307.8,76.9 308.6,76.8 309.4,76.6 310.2,76.5 310.9,76.3 311.7,76.2 312.5,76.1 313.3,75.9 314.1,75.8 314.9,75.7 315.7,75.6 316.4,75.5 317.2,75.4 318.0,75.3 318.8,75.2 319.6,75.1 320.4,75.0 321.2,74.9 321.9,74.9 322.7,74.8 323.5,74.8 324.3,74.7 325.1,74.7 325.9,74.6 326.7,74.6 327.4,74.5 328.2,74.5 329.0,74.5 329.8,74.5 330.6,74.5 331.4,74.5 332.2,74.5 333.0,74.5 333.7,74.5 334.5,74.5 335.3,74.5 336.1,74.5 336.9,74.6 337.7,74.6 338.5,74.6 339.2,74.7 340.0,74.7 340.8,74.8 341.6,74.9 342.4,74.9 343.2,75.0 344.0,75.1 344.7,75.2 345.5,75.2 346.3,75.3 347.1,75.4 347.9,75.5 348.7,75.7 349.5,75.8 350.2,75.9 351.0,76.0 351.8,76.1 352.6,76.3 353.4,76.4 354.2,76.6 355.0,76.7 355.7,76.9 356.5,77.0 357.3,77.2 358.1,77.4 358.9,77.6 359.7,77.7 360.5,77.9 361.2,78.1 362.0,78.3 362.8,78.5 363.6,78.7 364.4,78.9 365.2,79.1 366.0,79.4 366.8,79.6 367.5,79.8 368.3,80.1 369.1,80.3 369.9,80.6 370.7,80.8 371.5,81.1 372.3,81.3 373.0,81.6 373.8,81.9 374.6,82.1 375.4,82.4 376.2,82.7 377.0,83.0 377.8,83.3 378.5,83.6 379.3,83.9 380.1,84.2 380.9,84.5 381.7,84.9 382.5,85.2 383.3,85.5 384.0,85.8 384.8,86.2 385.6,86.5 386.4,86.9 387.2,87.2 388.0,87.6 388.8,88.0 389.5,88.3 390.3,88.7 391.1,89.1 391.9,89.5 392.7,89.8 393.5,90.2 394.3,90.6 395.0,91.0 395.8,91.4 396.6,91.8 397.4,92.2 398.2,92.7 399.0,93.1 399.8,93.5 400.5,93.9 401.3,94.4 402.1,94.8 402.9,95.3 403.7,95.7 404.5,96.2 405.3,96.6 406.1,97.1 406.8,97.5 407.6,98.0 408.4,98.5 409.2,98.9 410.0,99.4 410.8,99.9 411.6,100.4 412.3,100.9 413.1,101.4 413.9,101.9 414.7,102.4 415.5,102.9 416.3,103.4 417.1,103.9 417.8,104.4 418.6,105.0 419.4,105.5 420.2,106.0 421.0,106.6 421.8,107.1 422.6,107.6 423.3,108.2 424.1,108.7 424.9,109.3 425.7,109.8 426.5,110.4 427.3,111.0 428.1,111.5 428.8,112.1 429.6,112.7 430.4,113.3 431.2,113.8 432.0,114.4 432.8,115.0 433.6,115.6 434.3,116.2 435.1,116.8 435.9,117.4 436.7,118.0 437.5,118.6 438.3,119.2 439.1,119.8 439.8,120.4 440.6,121.0 441.4,121.7 442.2,122.3 443.0,122.9 443.8,123.5 444.6,124.2 445.4,124.8 446.1,125.5 446.9,126.1 447.7,126.7 448.5,127.4 449.3,128.0 450.1,128.7 450.9,129.3 451.6,130.0 452.4,130.7 453.2,131.3 454.0,132.0 454.8,132.7 455.6,133.3 456.4,134.0 457.1,134.7 457.9,135.4 458.7,136.0 459.5,136.7 460.3,137.4 461.1,138.1 461.9,138.8 462.6,139.5 463.4,140.2 464.2,140.9 465.0,141.5 465.8,142.2 466.6,142.9 467.4,143.6 468.1,144.4 468.9,145.1 469.7,145.8 470.5,146.5 471.3,147.2 472.1,147.9 472.9,148.6 473.6,149.3 474.4,150.1 475.2,150.8 476.0,151.5 476.8,152.2 477.6,152.9 478.4,153.7 479.1,154.4 479.9,155.1 480.7,155.9 481.5,156.6 482.3,157.3 483.1,158.1 483.9,158.8 484.6,159.5 485.4,160.3 486.2,161.0 487.0,161.7 487.8,162.5 488.6,163.2 489.4,164.0 490.2,164.7 490.9,165.4 491.7,166.2 492.5,166.9 493.3,167.7 494.1,168.4 494.9,169.2 495.7,169.9 496.4,170.7 497.2,171.4 498.0,172.2 498.8,172.9 499.6,173.7 500.4,174.4 501.2,175.2 501.9,175.9 502.7,176.7 503.5,177.4 504.3,178.2 505.1,179.0 505.9,179.7 506.7,180.5 507.4,181.2 508.2,182.0 509.0,182.7 509.8,183.5 510.6,184.2 511.4,185.0 512.2,185.7 512.9,186.5 513.7,187.3 514.5,188.0 515.3,188.8 516.1,189.5 516.9,190.3 517.7,191.0 518.4,191.8 519.2,192.5 520.0,193.3 520.8,194.0 521.6,194.8 522.4,195.5 523.2,196.3 524.0,197.0 524.7,197.8 525.5,198.5 526.3,199.3 527.1,200.0 527.9,200.8 528.7,201.5 529.5,202.2 530.2,203.0 531.0,203.7 531.8,204.5 532.6,205.2 533.4,205.9 534.2,206.7 535.0,207.4 535.7,208.1 536.5,208.9 537.3,209.6 538.1,210.3 538.9,211.1 539.7,211.8 540.5,212.5 541.2,213.3 542.0,214.0 542.8,214.7 543.6,215.4 544.4,216.1 545.2,216.9 546.0,217.6 546.7,218.3 547.5,219.0 548.3,219.7 549.1,220.4 549.9,221.1 550.7,221.8 551.5,222.5 552.2,223.2 553.0,223.9 553.8,224.6 554.6,225.3 555.4,226.0 556.2,226.7 557.0,227.4 557.7,228.1 558.5,228.8 559.3,229.5 560.1,230.1 560.9,230.8 561.7,231.5 562.5,232.2 563.2,232.8 564.0,233.5 564.8,234.2 565.6,234.8 566.4,235.5 567.2,236.2 568.0,236.8 568.8,237.5 569.5,238.1 570.3,238.8 571.1,239.4 571.9,240.1 572.7,240.7 573.5,241.3 574.3,242.0 575.0,242.6 575.8,243.2 576.6,243.9 577.4,244.5 578.2,245.1 579.0,245.7 579.8,246.3 580.5,247.0 581.3,247.6 582.1,248.2 582.9,248.8 583.7,249.4 584.5,250.0 585.3,250.6 586.0,251.2 586.8,251.7 587.6,252.3 588.4,252.9 589.2,253.5 590.0,254.1 590.8,254.6 591.5,255.2 592.3,255.8 593.1,256.3 593.9,256.9 594.7,257.4 595.5,258.0 596.3,258.5 597.0,259.1 597.8,259.6 598.6,260.1 599.4,260.7 600.2,261.2 601.0,261.7 601.8,262.2 602.5,262.7 603.3,263.2 604.1,263.8 604.9,264.3 605.7,264.8 606.5,265.3 607.3,265.7 608.1,266.2 608.8,266.7 609.6,267.2 610.4,267.7 611.2,268.1 612.0,268.6 612.8,269.1 613.6,269.5 614.3,270.0 615.1,270.4 615.9,270.9 616.7,271.3 617.5,271.8 618.3,272.2 619.1,272.6 619.8,273.1 620.6,273.5 621.4,273.9 622.2,274.3 623.0,274.7 623.8,275.1 624.6,275.5 625.3,275.9 626.1,276.3 626.9,276.7 627.7,277.1 628.5,277.5 629.3,277.8 630.1,278.2 630.8,278.6 631.6,278.9 632.4,279.3 633.2,279.6 634.0,280.0 634.8,280.3 635.6,280.6 636.3,281.0 637.1,281.3 637.9,281.6 638.7,281.9 639.5,282.3 640.3,282.6 641.1,282.9 641.9,283.2 642.6,283.5 643.4,283.7 644.2,284.0 645.0,284.3 645.8,284.6 646.6,284.8 647.4,285.1 648.1,285.4 648.9,285.6 649.7,285.9 650.5,286.1 651.3,286.4 652.1,286.6 652.9,286.8 653.6,287.0 654.4,287.3 655.2,287.5 656.0,287.7 656.8,287.9 657.6,288.1 658.4,288.3 659.1,288.5 659.9,288.7 660.7,288.8 661.5,289.0 662.3,289.2 663.1,289.3 663.9,289.5 664.6,289.7 665.4,289.8 666.2,290.0 667.0,290.1 667.8,290.2 668.6,290.4 669.4,290.5 670.1,290.6 670.9,290.7 671.7,290.8 672.5,290.9 673.3,291.0 674.1,291.1 674.9,291.2 675.6,291.3 676.4,291.4 677.2,291.4 678.0,291.5 678.8,291.6 679.6,291.6 680.4,291.7 681.1,291.7 681.9,291.8 682.7,291.8 683.5,291.8 684.3,291.8 685.1,291.9 685.9,291.9 686.7,291.9 687.4,291.9 688.2,291.9 689.0,291.9 689.8,291.9 690.6,291.9 691.4,291.8 692.2,291.8 692.9,291.8 693.7,291.7 694.5,291.7 695.3,291.7 696.1,291.6 696.9,291.5 697.7,291.5 698.4,291.4 699.2,291.3 700.0,291.3 700.8,291.2 701.6,291.1 702.4,291.0 703.2,290.9 703.9,290.8 704.7,290.7 705.5,290.6 706.3,290.4 707.1,290.3 707.9,290.2 708.7,290.1 709.4,289.9 710.2,289.8 711.0,289.6 711.8,289.5 712.6,289.3 713.4,289.1 714.2,289.0 714.9,288.8 715.7,288.6 716.5,288.4 717.3,288.2 718.1,288.0 718.9,287.8 719.7,287.6 720.5,287.4 721.2,287.2 722.0,287.0 722.8,286.8 723.6,286.5 724.4,286.3 725.2,286.1 726.0,285.8 726.7,285.6 727.5,285.3 728.3,285.0 729.1,284.8 729.9,284.5 730.7,284.2 731.5,284.0 732.2,283.7 733.0,283.4 733.8,283.1 734.6,282.8 735.4,282.5 736.2,282.2 737.0,281.9 737.7,281.5 738.5,281.2 739.3,280.9 740.1,280.6 740.9,280.2 741.7,279.9 742.5,279.5 743.2,279.2 744.0,278.8 744.8,278.5 745.6,278.1 746.4,277.8 747.2,277.4 748.0,277.0 748.7,276.6 749.5,276.2 750.3,275.9 751.1,275.5 751.9,275.1 752.7,274.7 753.5,274.2 754.2,273.8 755.0,273.4 755.8,273.0 756.6,272.6 757.4,272.1 758.2,271.7 759.0,271.3 759.8,270.8 760.5,270.4 761.3,269.9 762.1,269.5 762.9,269.0 763.7,268.6 764.5,268.1 765.3,267.6 766.0,267.2 766.8,266.7 767.6,266.2 768.4,265.7 769.2,265.2 770.0,264.7 770.8,264.2 771.5,263.7 772.3,263.2 773.1,262.7 773.9,262.2 774.7,261.7 775.5,261.2 776.3,260.6 777.0,260.1 777.8,259.6 778.6,259.0 779.4,258.5 780.2,258.0 781.0,257.4 781.8,256.9 782.5,256.3 783.3,255.8 784.1,255.2 784.9,254.6 785.7,254.1 786.5,253.5 787.3,252.9 788.0,252.4 788.8,251.8 789.6,251.2 790.4,250.6 791.2,250.0 792.0,249.4 792.8,248.8 793.5,248.2 794.3,247.6 795.1,247.0 795.9,246.4 796.7,245.8 797.5,245.2 798.3,244.6 799.0,244.0 799.8,243.4 800.6,242.7 801.4,242.1 802.2,241.5 803.0,240.8 803.8,240.2 804.6,239.6 805.3,238.9 806.1,238.3 806.9,237.6 807.7,237.0 808.5,236.3 809.3,235.7 810.1,235.0 810.8,234.4 811.6,233.7 812.4,233.0 813.2,232.4 814.0,231.7 814.8,231.0 815.6,230.4 816.3,229.7 817.1,229.0 817.9,228.3 818.7,227.7 819.5,227.0 820.3,226.3 821.1,225.6 821.8,224.9 822.6,224.2 823.4,223.5 824.2,222.8 825.0,222.1 825.8,221.4 826.6,220.7 827.3,220.0 828.1,219.3 828.9,218.6 829.7,217.9 830.5,217.2 831.3,216.5 832.1,215.8 832.8,215.1 833.6,214.4 834.4,213.7 835.2,212.9 836.0,212.2 836.8,211.5 837.6,210.8 838.4,210.1 839.1,209.3 839.9,208.6 840.7,207.9 841.5,207.2 842.3,206.4 843.1,205.7 843.9,205.0 844.6,204.2 845.4,203.5 846.2,202.8 847.0,202.1 847.8,201.3 848.6,200.6 849.4,199.8 850.1,199.1 850.9,198.4 851.7,197.6 852.5,196.9 853.3,196.2 854.1,195.4 854.9,194.7 855.6,193.9 856.4,193.2 857.2,192.5 858.0,191.7" fill="none" stroke="#ff0000" stroke-width="2" stroke-linejoin="round"/>
<polyline points="72.0,184.0 72.8,184.0 73.6,184.0 74.4,184.0 75.1,184.0 75.9,184.0 76.7,184.0 77.5,184.0 78.3,184.0 79.1,184.0 79.9,184.0 80.6,184.0 81.4,184.0 82.2,184.0 83.0,184.0 83.8,184.0 84.6,184.0 85.4,184.0 86.1,184.0 86.9,184.0 87.7,184.0 88.5,184.0 89.3,184.0 90.1,184.0 90.9,184.0 91.7,184.0 92.4,184.0 93.2,184.0 94.0,184.0 94.8,184.0 95.6,184.0 96.4,184.0 97.2,184.0 97.9,184.0 98.7,184.0 99.5,184.0 100.3,184.0 101.1,184.0 101.9,184.0 102.7,184.0 103.4,184.0 104.2,184.0 105.0,184.0 105.8,184.0 106.6,184.0 107.4,184.0 108.2,184.0 108.9,184.0 109.7,184.0 110.5,184.0 111.3,184.0 112.1,184.0 112.9,184.0 113.7,184.0 114.4,184.0 115.2,184.0 116.0,184.0 116.8,184.0 117.6,184.0 118.4,184.0 119.2,184.0 119.9,184.0 120.7,184.0 121.5,184.0 122.3,184.0 123.1,184.0 123.9,184.0 124.7,184.0 125.4,184.0 126.2,184.0 127.0,184.0 127.8,184.0 128.6,184.0 129.4,184.0 130.2,184.0 130.9,184.0 131.7,184.0 132.5,184.0 133.3,184.0 134.1,184.0 134.9,184.0 135.7,184.0 136.5,184.0 137.2,184.0 138.0,184.0 138.8,184.0 139.6,184.0 140.4,184.0 141.2,184.0 142.0,184.0 142.7,184.0 143.5,184.0 144.3,184.0 145.1,184.0 145.9,184.0 146.7,184.0 147.5,184.0 148.2,184.0 149.0,184.0 149.8,184.0 150.6,184.0 151.4,183.9 152.2,183.6 153.0,183.0 153.7,182.2 154.5,181.2 155.3,179.9 156.1,178.5 156.9,176.8 157.7,174.9 158.5,172.7 159.2,170.5 160.0,168.3 160.8,166.1 161.6,163.9 162.4,161.7 163.2,159.5 164.0,157.4 164.7,155.3 165.5,153.2 166.3,151.1 167.1,149.1 167.9,147.1 168.7,145.1 169.5,143.1 170.2,141.2 171.0,139.3 171.8,137.5 172.6,135.7 173.4,133.9 174.2,132.2 175.0,130.5 175.8,128.9 176.5,127.3 177.3,125.8 178.1,124.3 178.9,122.8 179.7,121.4 180.5,120.1 181.3,118.8 182.0,117.5 182.8,116.4 183.6,115.2 184.4,114.1 185.2,113.1 186.0,112.2 186.8,111.3 187.5,110.4 188.3,109.7 189.1,108.9 189.9,108.3 190.7,107.7 191.5,107.2 192.3,106.7 193.0,106.3 193.8,105.9 194.6,105.7 195.4,105.4 196.2,105.3 197.0,105.2 197.8,105.2 198.5,105.2 199.3,105.3 200.1,105.5 200.9,105.7 201.7,106.0 202.5,106.4 203.3,106.8 204.0,107.3 204.8,107.9 205.6,108.5 206.4,109.2 207.2,109.9 208.0,110.7 208.8,111.6 209.6,112.5 210.3,113.4 211.1,114.5 211.9,115.6 212.7,116.7 213.5,117.9 214.3,119.2 215.1,120.5 215.8,121.8 216.6,123.2 217.4,124.7 218.2,126.2 219.0,127.7 219.8,129.3 220.6,131.0 221.3,132.7 222.1,134.4 222.9,136.2 223.7,138.0 224.5,139.8 225.3,141.7 226.1,143.6 226.8,145.5 227.6,147.5 228.4,149.5 229.2,151.5 230.0,153.6 230.8,155.7 231.6,157.8 232.3,159.9 233.1,162.1 233.9,164.2 234.7,166.4 235.5,168.6 236.3,170.8 237.1,173.0 237.8,175.3 238.6,177.5 239.4,179.7 240.2,182.0 241.0,184.2 241.8,186.4 242.6,188.7 243.3,190.9 244.1,193.1 244.9,195.4 245.7,197.6 246.5,199.8 247.3,201.9 248.1,204.1 248.8,206.3 249.6,208.4 250.4,210.5 251.2,212.6 252.0,214.7 252.8,216.7 253.6,218.7 254.4,220.7 255.1,222.7 255.9,224.6 256.7,226.5 257.5,228.3 258.3,230.2 259.1,231.9 259.9,233.7 260.6,235.4 261.4,237.0 262.2,238.7 263.0,240.2 263.8,241.7 264.6,243.2 265.4,244.7 266.1,246.0 266.9,247.4 267.7,248.6 268.5,249.9 269.3,251.0 270.1,252.1 270.9,253.2 271.6,254.2 272.4,255.1 273.2,256.0 274.0,256.8 274.8,257.6 275.6,258.3 276.4,258.9 277.1,259.5 277.9,260.1 278.7,260.5 279.5,260.9 280.3,261.2 281.1,261.5 281.9,261.7 282.6,261.9 283.4,261.9 284.2,262.0 285.0,261.9 285.8,261.8 286.6,261.6 287.4,261.4 288.1,261.1 288.9,260.7 289.7,260.3 290.5,259.8 291.3,259.2 292.1,258.6 292.9,258.0 293.7,257.2 294.4,256.4 295.2,255.6 296.0,254.7 296.8,253.7 297.6,252.7 298.4,251.6 299.2,250.5 299.9,249.3 300.7,248.0 301.5,246.7 302.3,245.4 303.1,244.0 303.9,242.5 304.7,241.1 305.4,239.5 306.2,237.9 307.0,236.3 307.8,234.6 308.6,232.9 309.4,231.2 310.2,229.4 310.9,227.6 311.7,225.7 312.5,223.8 313.3,221.9 314.1,219.9 314.9,217.9 315.7,215.9 316.4,213.9 317.2,211.8 318.0,209.7 318.8,207.6 319.6,205.5 320.4,203.4 321.2,201.2 321.9,199.0 322.7,196.9 323.5,194.7 324.3,192.5 325.1,190.3 325.9,188.0 326.7,185.8 327.4,183.6 328.2,181.4 329.0,179.2 329.8,177.0 330.6,174.8 331.4,172.6 332.2,170.4 333.0,168.2 333.7,166.1 334.5,163.9 335.3,161.8 336.1,159.7 336.9,157.6 337.7,155.5 338.5,153.5 339.2,151.5 340.0,149.5 340.8,147.5 341.6,145.6 342.4,143.7 343.2,141.8 344.0,140.0 344.7,138.2 345.5,136.4 346.3,134.7 347.1,133.0 347.9,131.4 348.7,129.8 349.5,128.3 350.2,126.8 351.0,125.3 351.8,123.9 352.6,122.5 353.4,121.2 354.2,120.0 355.0,118.8 355.7,117.6 356.5,116.5 357.3,115.5 358.1,114.5 358.9,113.6 359.7,112.7 360.5,111.9 361.2,111.1 362.0,110.5 362.8,109.8 363.6,109.3 364.4,108.7 365.2,108.3 366.0,107.9 366.8,107.6 367.5,107.3 368.3,107.1 369.1,107.0 369.9,106.9 370.7,106.9 371.5,107.0 372.3,107.1 373.0,107.3 373.8,107.5 374.6,107.8 375.4,108.2 376.2,108.6 377.0,109.1 377.8,109.6 378.5,110.2 379.3,110.9 380.1,111.6 380.9,112.4 381.7,113.3 382.5,114.2 383.3,115.2 384.0,116.2 384.8,117.2 385.6,118.4 386.4,119.6 387.2,120.8 388.0,122.1 388.8,123.4 389.5,124.8 390.3,126.2 391.1,127.7 391.9,129.2 392.7,130.8 393.5,132.4 394.3,134.1 395.0,135.8 395.8,137.5 396.6,139.3 397.4,141.1 398.2,142.9 399.0,144.8 399.8,146.7 400.5,148.6 401.3,150.6 402.1,152.6 402.9,154.6 403.7,156.7 404.5,158.7 405.3,160.8 406.1,162.9 406.8,165.0 407.6,167.2 408.4,169.3 409.2,171.5 410.0,173.7 410.8,175.8 411.6,178.0 412.3,180.2 413.1,182.4 413.9,184.6 414.7,186.8 415.5,189.0 416.3,191.1 417.1,193.3 417.8,195.5 418.6,197.7 419.4,199.8 420.2,201.9 421.0,204.1 421.8,206.2 422.6,208.2 423.3,210.3 424.1,212.3 424.9,214.4 425.7,216.4 426.5,218.3 427.3,220.3 428.1,222.2 428.8,224.0 429.6,225.9 430.4,227.7 431.2,229.5 432.0,231.2 432.8,232.9 433.6,234.6 434.3,236.2 435.1,237.7 435.9,239.3 436.7,240.8 437.5,242.2 438.3,243.6 439.1,244.9 439.8,246.2 440.6,247.4 441.4,248.6 442.2,249.8 443.0,250.8 443.8,251.9 444.6,252.8 445.4,253.7 446.1,254.6 446.9,255.4 447.7,256.1 448.5,256.8 449.3,257.4 450.1,258.0 450.9,258.5 451.6,258.9 452.4,259.3 453.2,259.6 454.0,259.9 454.8,260.1 455.6,260.2 456.4,260.3 457.1,260.3 457.9,260.2 458.7,260.1 459.5,259.9 460.3,259.7 461.1,259.3 461.9,259.0 462.6,258.5 463.4,258.1 464.2,257.5 465.0,256.9 465.8,256.2 466.6,255.5 467.4,254.7 468.1,253.9 468.9,253.0 469.7,252.0 470.5,251.0 471.3,249.9 472.1,248.8 472.9,247.6 473.6,246.4 474.4,245.1 475.2,243.8 476.0,242.4 476.8,241.0 477.6,239.6 478.4,238.0 479.1,236.5 479.9,234.9 480.7,233.2 481.5,231.6 482.3,229.8 483.1,228.1 483.9,226.3 484.6,224.5 485.4,222.6 486.2,220.7 487.0,218.8 487.8,216.9 488.6,214.9 489.4,212.9 490.2,210.9 490.9,208.8 491.7,206.8 492.5,204.7 493.3,202.6 494.1,200.5 494.9,198.3 495.7,196.2 496.4,194.1 497.2,191.9 498.0,189.7 498.8,187.6 499.6,185.4 500.4,183.2 501.2,181.1 501.9,178.9 502.7,176.7 503.5,174.6 504.3,172.5 505.1,170.3 505.9,168.2 506.7,166.1 507.4,164.0 508.2,161.9 509.0,159.9 509.8,157.8 510.6,155.8 511.4,153.8 512.2,151.8 512.9,149.9 513.7,148.0 514.5,146.1 515.3,144.2 516.1,142.4 516.9,140.6 517.7,138.9 518.4,137.2 519.2,135.5 520.0,133.9 520.8,132.3 521.6,130.7 522.4,129.2 523.2,127.7 524.0,126.3 524.7,125.0 525.5,123.6 526.3,122.4 527.1,121.2 527.9,120.0 528.7,118.9 529.5,117.8 530.2,116.8 531.0,115.9 531.8,115.0 532.6,114.1 533.4,113.3 534.2,112.6 535.0,111.9 535.7,111.3 536.5,110.8 537.3,110.3 538.1,109.9 538.9,109.5 539.7,109.2 540.5,109.0 541.2,108.8 542.0,108.6 542.8,108.6 543.6,108.6 544.4,108.7 545.2,108.8 546.0,109.0 546.7,109.2 547.5,109.5 548.3,109.9 549.1,110.3 549.9,110.8 550.7,111.4 551.5,112.0 552.2,112.6 553.0,113.4 553.8,114.1 554.6,115.0 555.4,115.9 556.2,116.8 557.0,117.8 557.7,118.9 558.5,120.0 559.3,121.2 560.1,122.4 560.9,123.7 561.7,125.0 562.5,126.3 563.2,127.7 564.0,129.2 564.8,130.7 565.6,132.2 566.4,133.8 567.2,135.5 568.0,137.1 568.8,138.8 569.5,140.6 570.3,142.3 571.1,144.1 571.9,146.0 572.7,147.9 573.5,149.8 574.3,151.7 575.0,153.6 575.8,155.6 576.6,157.6 577.4,159.6 578.2,161.7 579.0,163.7 579.8,165.8 580.5,167.9 581.3,170.0 582.1,172.1 582.9,174.3 583.7,176.4 584.5,178.5 585.3,180.7 586.0,182.8 586.8,185.0 587.6,187.1 588.4,189.2 589.2,191.4 590.0,193.5 590.8,195.6 591.5,197.7 592.3,199.8 593.1,201.9 593.9,204.0 594.7,206.0 595.5,208.1 596.3,210.1 597.0,212.1 597.8,214.1 598.6,216.0 599.4,217.9 600.2,219.8 601.0,221.7 601.8,223.5 602.5,225.3 603.3,227.1 604.1,228.8 604.9,230.5 605.7,232.1 606.5,233.7 607.3,235.3 608.1,236.8 608.8,238.3 609.6,239.8 610.4,241.2 611.2,242.5 612.0,243.8 612.8,245.1 613.6,246.3 614.3,247.4 615.1,248.5 615.9,249.6 616.7,250.6 617.5,251.5 618.3,252.4 619.1,253.2 619.8,254.0 620.6,254.7 621.4,255.3 622.2,255.9 623.0,256.5 623.8,256.9 624.6,257.4 625.3,257.7 626.1,258.0 626.9,258.3 627.7,258.4 628.5,258.5 629.3,258.6 630.1,258.6 630.8,258.5 631.6,258.4 632.4,258.2 633.2,258.0 634.0,257.6 634.8,257.3 635.6,256.8 636.3,256.4 637.1,255.8 637.9,255.2 638.7,254.5 639.5,253.8 640.3,253.0 641.1,252.2 641.9,251.3 642.6,250.4 643.4,249.4 644.2,248.3 645.0,247.2 645.8,246.0 646.6,244.8 647.4,243.6 648.1,242.3 648.9,240.9 649.7,239.5 650.5,238.1 651.3,236.6 652.1,235.1 652.9,233.5 653.6,231.9 654.4,230.2 655.2,228.5 656.0,226.8 656.8,225.1 657.6,223.3 658.4,221.4 659.1,219.6 659.9,217.7 660.7,215.8 661.5,213.9 662.3,211.9 663.1,209.9 663.9,207.9 664.6,205.9 665.4,203.9 666.2,201.8 667.0,199.7 667.8,197.7 668.6,195.6 669.4,193.5 670.1,191.4 670.9,189.2 671.7,187.1 672.5,185.0 673.3,182.9 674.1,180.8 674.9,178.6 675.6,176.5 676.4,174.4 677.2,172.3 678.0,170.2 678.8,168.2 679.6,166.1 680.4,164.1 681.1,162.0 681.9,160.0 682.7,158.0 683.5,156.1 684.3,154.1 685.1,152.2 685.9,150.3 686.7,148.4 687.4,146.6 688.2,144.8 689.0,143.0 689.8,141.3 690.6,139.6 691.4,137.9 692.2,136.3 692.9,134.7 693.7,133.1 694.5,131.6 695.3,130.1 696.1,128.7 696.9,127.3 697.7,126.0 698.4,124.7 699.2,123.5 700.0,122.3 700.8,121.2 701.6,120.1 702.4,119.1 703.2,118.1 703.9,117.2 704.7,116.3 705.5,115.5 706.3,114.7 707.1,114.0 707.9,113.4 708.7,112.8 709.4,112.3 710.2,111.8 711.0,111.4 711.8,111.1 712.6,110.8 713.4,110.5 714.2,110.4 714.9,110.3 715.7,110.2 716.5,110.2 717.3,110.3 718.1,110.4 718.9,110.6 719.7,110.9 720.5,111.2 721.2,111.6 722.0,112.0 722.8,112.5 723.6,113.0 724.4,113.6 725.2,114.3 726.0,115.0 726.7,115.8 727.5,116.6 728.3,117.5 729.1,118.5 729.9,119.4 730.7,120.5 731.5,121.6 732.2,122.7 733.0,123.9 733.8,125.2 734.6,126.5 735.4,127.8 736.2,129.2 737.0,130.6 737.7,132.1 738.5,133.6 739.3,135.2 740.1,136.8 740.9,138.4 741.7,140.1 742.5,141.8 743.2,143.6 744.0,145.3 744.8,147.1 745.6,149.0 746.4,150.8 747.2,152.7 748.0,154.6 748.7,156.6 749.5,158.5 750.3,160.5 751.1,162.5 751.9,164.5 752.7,166.6 753.5,168.6 754.2,170.7 755.0,172.8 755.8,174.8 756.6,176.9 757.4,179.0 758.2,181.1 759.0,183.2 759.8,185.3 760.5,187.4 761.3,189.5 762.1,191.6 762.9,193.7 763.7,195.7 764.5,197.8 765.3,199.8 766.0,201.9 766.8,203.9 767.6,205.9 768.4,207.9 769.2,209.9 770.0,211.8 770.8,213.7 771.5,215.6 772.3,217.5 773.1,219.4 773.9,221.2 774.7,223.0 775.5,224.7 776.3,226.4 777.0,228.1 777.8,229.8 778.6,231.4 779.4,232.9 780.2,234.5 781.0,236.0 781.8,237.4 782.5,238.8 783.3,240.2 784.1,241.5 784.9,242.7 785.7,244.0 786.5,245.1 787.3,246.2 788.0,247.3 788.8,248.3 789.6,249.3 790.4,250.2 791.2,251.0 792.0,251.8 792.8,252.6 793.5,253.3 794.3,253.9 795.1,254.5 795.9,255.0 796.7,255.4 797.5,255.8 798.3,256.2 799.0,256.5 799.8,256.7 800.6,256.8 801.4,256.9 802.2,257.0 803.0,257.0 803.8,256.9 804.6,256.7 805.3,256.6 806.1,256.3 806.9,256.0 807.7,255.6 808.5,255.2 809.3,254.7 810.1,254.1 810.8,253.5 811.6,252.9 812.4,252.2 813.2,251.4 814.0,250.6 814.8,249.7 815.6,248.8 816.3,247.8 817.1,246.7 817.9,245.6 818.7,244.5 819.5,243.3 820.3,242.1 821.1,240.8 821.8,239.4 822.6,238.1 823.4,236.7 824.2,235.2 825.0,233.7 825.8,232.1 826.6,230.6 827.3,228.9 828.1,227.3 828.9,225.6 829.7,223.9 830.5,222.1 831.3,220.3 832.1,218.5 832.8,216.6 833.6,214.8 834.4,212.9 835.2,211.0 836.0,209.0 836.8,207.1 837.6,205.1 838.4,203.1 839.1,201.1 839.9,199.0 840.7,197.0 841.5,194.9 842.3,192.9 843.1,190.8 843.9,188.8 844.6,186.7 845.4,184.6 846.2,182.5 847.0,180.5 847.8,178.4 848.6,176.3 849.4,174.3 850.1,172.2 850.9,170.2 851.7,168.2 852.5,166.1 853.3,164.1 854.1,162.2 854.9,160.2 855.6,158.3 856.4,156.3 857.2,154.4 858.0,152.6" fill="none" stroke="#00b4b4" stroke-width="2" stroke-linejoin="round"/>
<polyline points="72.0,213.0 150.6,213.0 158.5,156.0 858.0,156.0" fill="none" stroke="#ff00ff" stroke-width="2" stroke-linejoin="round"/>
</g>
<g font-size="16" fill="#d0d0d0">
<text x="62.6" y="54.9" text-anchor="end">120mV</text>
<text x="62.6" y="77.6" text-anchor="end">100mV</text>
<text x="62.6" y="100.4" text-anchor="end">80mV</text>
<text x="62.6" y="123.1" text-anchor="end">60mV</text>
<text x="62.6" y="145.8" text-anchor="end">40mV</text>
<text x="62.6" y="168.5" text-anchor="end">20mV</text>
<text x="62.6" y="191.3" text-anchor="end">0mV</text>
<text x="62.6" y="214.0" text-anchor="end">-20mV</text>
<text x="62.6" y="236.7" text-anchor="end">-40mV</text>
<text x="62.6" y="259.4" text-anchor="end">-60mV</text>
<text x="62.6" y="282.2" text-anchor="end">-80mV</text>
<text x="62.6" y="304.9" text-anchor="end">-100mV</text>
<text x="71.5" y="323" text-anchor="middle">0µs</text>
<text x="150.1" y="323" text-anchor="middle">1µs</text>
<text x="228.7" y="323" text-anchor="middle">2µs</text>
<text x="307.3" y="323" text-anchor="middle">3µs</text>
<text x="385.9" y="323" text-anchor="middle">4µs</text>
<text x="464.5" y="323" text-anchor="middle">5µs</text>
<text x="543.1" y="323" text-anchor="middle">6µs</text>
<text x="621.7" y="323" text-anchor="middle">7µs</text>
<text x="700.3" y="323" text-anchor="middle">8µs</text>
<text x="778.9" y="323" text-anchor="middle">9µs</text>
<text x="857.5" y="323" text-anchor="middle">10µs</text>
</g>
<g font-size="16.6" text-anchor="middle">
<text x="150.1" y="42.5" fill="#00ff00">V(u<tspan dy="-1.6">_</tspan><tspan dy="1.6">sk1)</tspan></text>
<text x="307.3" y="42.5" fill="#0000ff">V(u<tspan dy="-1.6">_</tspan><tspan dy="1.6">sk2)</tspan></text>
<text x="464.5" y="42.5" fill="#ff0000">V(u<tspan dy="-1.6">_</tspan><tspan dy="1.6">sk3)</tspan></text>
<text x="621.7" y="42.5" fill="#00b4b4">V(u<tspan dy="-1.6">_</tspan><tspan dy="1.6">sk4)</tspan></text>
<text x="778.9" y="42.5" fill="#ff00ff">V(mp1)</text>
</g>
</svg>
<svg style="position:absolute;left:0;top:0" width="883" height="610" viewBox="0 0 883 610">
<path d="M8 371.5h1M20 371.5h1M31 371.5h1M43 371.5h1M55 371.5h1M67 371.5h1M78 371.5h1M90 371.5h1M102 371.5h1M113 371.5h1M125 371.5h1M137 371.5h1M149 371.5h1M160 371.5h1M172 371.5h1M184 371.5h1M195 371.5h1M207 371.5h1M219 371.5h1M230 371.5h1M242 371.5h1M254 371.5h1M266 371.5h1M277 371.5h1M289 371.5h1M301 371.5h1M312 371.5h1M324 371.5h1M336 371.5h1M348 371.5h1M359 371.5h1M371 371.5h1M383 371.5h1M394 371.5h1M406 371.5h1M418 371.5h1M430 371.5h1M441 371.5h1M453 371.5h1M465 371.5h1M476 371.5h1M488 371.5h1M500 371.5h1M512 371.5h1M523 371.5h1M535 371.5h1M547 371.5h1M558 371.5h1M570 371.5h1M582 371.5h1M594 371.5h1M605 371.5h1M617 371.5h1M629 371.5h1M640 371.5h1M652 371.5h1M664 371.5h1M675 371.5h1M687 371.5h1M699 371.5h1M711 371.5h1M722 371.5h1M734 371.5h1M746 371.5h1M757 371.5h1M769 371.5h1M781 371.5h1M793 371.5h1M804 371.5h1M816 371.5h1M828 371.5h1M839 371.5h1M851 371.5h1M863 371.5h1M874 371.5h1M8 383.5h1M20 383.5h1M31 383.5h1M43 383.5h1M55 383.5h1M67 383.5h1M78 383.5h1M90 383.5h1M102 383.5h1M113 383.5h1M125 383.5h1M137 383.5h1M149 383.5h1M160 383.5h1M172 383.5h1M184 383.5h1M195 383.5h1M207 383.5h1M219 383.5h1M230 383.5h1M242 383.5h1M254 383.5h1M266 383.5h1M277 383.5h1M289 383.5h1M301 383.5h1M312 383.5h1M324 383.5h1M336 383.5h1M348 383.5h1M359 383.5h1M371 383.5h1M383 383.5h1M394 383.5h1M406 383.5h1M418 383.5h1M430 383.5h1M441 383.5h1M453 383.5h1M465 383.5h1M476 383.5h1M488 383.5h1M500 383.5h1M512 383.5h1M523 383.5h1M535 383.5h1M547 383.5h1M558 383.5h1M570 383.5h1M582 383.5h1M594 383.5h1M605 383.5h1M617 383.5h1M629 383.5h1M640 383.5h1M652 383.5h1M664 383.5h1M675 383.5h1M687 383.5h1M699 383.5h1M711 383.5h1M722 383.5h1M734 383.5h1M746 383.5h1M757 383.5h1M769 383.5h1M781 383.5h1M793 383.5h1M804 383.5h1M816 383.5h1M828 383.5h1M839 383.5h1M851 383.5h1M863 383.5h1M874 383.5h1M8 395.5h1M20 395.5h1M31 395.5h1M43 395.5h1M55 395.5h1M67 395.5h1M78 395.5h1M90 395.5h1M102 395.5h1M113 395.5h1M125 395.5h1M137 395.5h1M149 395.5h1M160 395.5h1M172 395.5h1M184 395.5h1M195 395.5h1M207 395.5h1M219 395.5h1M230 395.5h1M242 395.5h1M254 395.5h1M266 395.5h1M277 395.5h1M289 395.5h1M301 395.5h1M312 395.5h1M324 395.5h1M336 395.5h1M348 395.5h1M359 395.5h1M371 395.5h1M383 395.5h1M394 395.5h1M406 395.5h1M418 395.5h1M430 395.5h1M441 395.5h1M453 395.5h1M465 395.5h1M476 395.5h1M488 395.5h1M500 395.5h1M512 395.5h1M523 395.5h1M535 395.5h1M547 395.5h1M558 395.5h1M570 395.5h1M582 395.5h1M594 395.5h1M605 395.5h1M617 395.5h1M629 395.5h1M640 395.5h1M652 395.5h1M664 395.5h1M675 395.5h1M687 395.5h1M699 395.5h1M711 395.5h1M722 395.5h1M734 395.5h1M746 395.5h1M757 395.5h1M769 395.5h1M781 395.5h1M793 395.5h1M804 395.5h1M816 395.5h1M828 395.5h1M839 395.5h1M851 395.5h1M863 395.5h1M874 395.5h1M8 406.5h1M20 406.5h1M31 406.5h1M43 406.5h1M55 406.5h1M67 406.5h1M78 406.5h1M90 406.5h1M102 406.5h1M113 406.5h1M125 406.5h1M137 406.5h1M149 406.5h1M160 406.5h1M172 406.5h1M184 406.5h1M195 406.5h1M207 406.5h1M219 406.5h1M230 406.5h1M242 406.5h1M254 406.5h1M266 406.5h1M277 406.5h1M289 406.5h1M301 406.5h1M312 406.5h1M324 406.5h1M336 406.5h1M348 406.5h1M359 406.5h1M371 406.5h1M383 406.5h1M394 406.5h1M406 406.5h1M418 406.5h1M430 406.5h1M441 406.5h1M453 406.5h1M465 406.5h1M476 406.5h1M488 406.5h1M500 406.5h1M512 406.5h1M523 406.5h1M535 406.5h1M547 406.5h1M558 406.5h1M570 406.5h1M582 406.5h1M594 406.5h1M605 406.5h1M617 406.5h1M629 406.5h1M640 406.5h1M652 406.5h1M664 406.5h1M675 406.5h1M687 406.5h1M699 406.5h1M711 406.5h1M722 406.5h1M734 406.5h1M746 406.5h1M757 406.5h1M769 406.5h1M781 406.5h1M793 406.5h1M804 406.5h1M816 406.5h1M828 406.5h1M839 406.5h1M851 406.5h1M863 406.5h1M874 406.5h1M8 418.5h1M20 418.5h1M31 418.5h1M43 418.5h1M55 418.5h1M67 418.5h1M78 418.5h1M90 418.5h1M102 418.5h1M113 418.5h1M125 418.5h1M137 418.5h1M149 418.5h1M160 418.5h1M172 418.5h1M184 418.5h1M195 418.5h1M207 418.5h1M219 418.5h1M230 418.5h1M242 418.5h1M254 418.5h1M266 418.5h1M277 418.5h1M289 418.5h1M301 418.5h1M312 418.5h1M324 418.5h1M336 418.5h1M348 418.5h1M359 418.5h1M371 418.5h1M383 418.5h1M394 418.5h1M406 418.5h1M418 418.5h1M430 418.5h1M441 418.5h1M453 418.5h1M465 418.5h1M476 418.5h1M488 418.5h1M500 418.5h1M512 418.5h1M523 418.5h1M535 418.5h1M547 418.5h1M558 418.5h1M570 418.5h1M582 418.5h1M594 418.5h1M605 418.5h1M617 418.5h1M629 418.5h1M640 418.5h1M652 418.5h1M664 418.5h1M675 418.5h1M687 418.5h1M699 418.5h1M711 418.5h1M722 418.5h1M734 418.5h1M746 418.5h1M757 418.5h1M769 418.5h1M781 418.5h1M793 418.5h1M804 418.5h1M816 418.5h1M828 418.5h1M839 418.5h1M851 418.5h1M863 418.5h1M874 418.5h1M8 430.5h1M20 430.5h1M31 430.5h1M43 430.5h1M55 430.5h1M67 430.5h1M78 430.5h1M90 430.5h1M102 430.5h1M113 430.5h1M125 430.5h1M137 430.5h1M149 430.5h1M160 430.5h1M172 430.5h1M184 430.5h1M195 430.5h1M207 430.5h1M219 430.5h1M230 430.5h1M242 430.5h1M254 430.5h1M266 430.5h1M277 430.5h1M289 430.5h1M301 430.5h1M312 430.5h1M324 430.5h1M336 430.5h1M348 430.5h1M359 430.5h1M371 430.5h1M383 430.5h1M394 430.5h1M406 430.5h1M418 430.5h1M430 430.5h1M441 430.5h1M453 430.5h1M465 430.5h1M476 430.5h1M488 430.5h1M500 430.5h1M512 430.5h1M523 430.5h1M535 430.5h1M547 430.5h1M558 430.5h1M570 430.5h1M582 430.5h1M594 430.5h1M605 430.5h1M617 430.5h1M629 430.5h1M640 430.5h1M652 430.5h1M664 430.5h1M675 430.5h1M687 430.5h1M699 430.5h1M711 430.5h1M722 430.5h1M734 430.5h1M746 430.5h1M757 430.5h1M769 430.5h1M781 430.5h1M793 430.5h1M804 430.5h1M816 430.5h1M828 430.5h1M839 430.5h1M851 430.5h1M863 430.5h1M874 430.5h1M8 441.5h1M20 441.5h1M31 441.5h1M43 441.5h1M55 441.5h1M67 441.5h1M78 441.5h1M90 441.5h1M102 441.5h1M113 441.5h1M125 441.5h1M137 441.5h1M149 441.5h1M160 441.5h1M172 441.5h1M184 441.5h1M195 441.5h1M207 441.5h1M219 441.5h1M230 441.5h1M242 441.5h1M254 441.5h1M266 441.5h1M277 441.5h1M289 441.5h1M301 441.5h1M312 441.5h1M324 441.5h1M336 441.5h1M348 441.5h1M359 441.5h1M371 441.5h1M383 441.5h1M394 441.5h1M406 441.5h1M418 441.5h1M430 441.5h1M441 441.5h1M453 441.5h1M465 441.5h1M476 441.5h1M488 441.5h1M500 441.5h1M512 441.5h1M523 441.5h1M535 441.5h1M547 441.5h1M558 441.5h1M570 441.5h1M582 441.5h1M594 441.5h1M605 441.5h1M617 441.5h1M629 441.5h1M640 441.5h1M652 441.5h1M664 441.5h1M675 441.5h1M687 441.5h1M699 441.5h1M711 441.5h1M722 441.5h1M734 441.5h1M746 441.5h1M757 441.5h1M769 441.5h1M781 441.5h1M793 441.5h1M804 441.5h1M816 441.5h1M828 441.5h1M839 441.5h1M851 441.5h1M863 441.5h1M874 441.5h1M8 453.5h1M20 453.5h1M31 453.5h1M43 453.5h1M55 453.5h1M67 453.5h1M78 453.5h1M90 453.5h1M102 453.5h1M113 453.5h1M125 453.5h1M137 453.5h1M149 453.5h1M160 453.5h1M172 453.5h1M184 453.5h1M195 453.5h1M207 453.5h1M219 453.5h1M230 453.5h1M242 453.5h1M254 453.5h1M266 453.5h1M277 453.5h1M289 453.5h1M301 453.5h1M312 453.5h1M324 453.5h1M336 453.5h1M348 453.5h1M359 453.5h1M371 453.5h1M383 453.5h1M394 453.5h1M406 453.5h1M418 453.5h1M430 453.5h1M441 453.5h1M453 453.5h1M465 453.5h1M476 453.5h1M488 453.5h1M500 453.5h1M512 453.5h1M523 453.5h1M535 453.5h1M547 453.5h1M558 453.5h1M570 453.5h1M582 453.5h1M594 453.5h1M605 453.5h1M617 453.5h1M629 453.5h1M640 453.5h1M652 453.5h1M664 453.5h1M675 453.5h1M687 453.5h1M699 453.5h1M711 453.5h1M722 453.5h1M734 453.5h1M746 453.5h1M757 453.5h1M769 453.5h1M781 453.5h1M793 453.5h1M804 453.5h1M816 453.5h1M828 453.5h1M839 453.5h1M851 453.5h1M863 453.5h1M874 453.5h1M8 465.5h1M20 465.5h1M31 465.5h1M43 465.5h1M55 465.5h1M67 465.5h1M78 465.5h1M90 465.5h1M102 465.5h1M113 465.5h1M125 465.5h1M137 465.5h1M149 465.5h1M160 465.5h1M172 465.5h1M184 465.5h1M195 465.5h1M207 465.5h1M219 465.5h1M230 465.5h1M242 465.5h1M254 465.5h1M266 465.5h1M277 465.5h1M289 465.5h1M301 465.5h1M312 465.5h1M324 465.5h1M336 465.5h1M348 465.5h1M359 465.5h1M371 465.5h1M383 465.5h1M394 465.5h1M406 465.5h1M418 465.5h1M430 465.5h1M441 465.5h1M453 465.5h1M465 465.5h1M476 465.5h1M488 465.5h1M500 465.5h1M512 465.5h1M523 465.5h1M535 465.5h1M547 465.5h1M558 465.5h1M570 465.5h1M582 465.5h1M594 465.5h1M605 465.5h1M617 465.5h1M629 465.5h1M640 465.5h1M652 465.5h1M664 465.5h1M675 465.5h1M687 465.5h1M699 465.5h1M711 465.5h1M722 465.5h1M734 465.5h1M746 465.5h1M757 465.5h1M769 465.5h1M781 465.5h1M793 465.5h1M804 465.5h1M816 465.5h1M828 465.5h1M839 465.5h1M851 465.5h1M863 465.5h1M874 465.5h1M8 477.5h1M20 477.5h1M31 477.5h1M43 477.5h1M55 477.5h1M67 477.5h1M78 477.5h1M90 477.5h1M102 477.5h1M113 477.5h1M125 477.5h1M137 477.5h1M149 477.5h1M160 477.5h1M172 477.5h1M184 477.5h1M195 477.5h1M207 477.5h1M219 477.5h1M230 477.5h1M242 477.5h1M254 477.5h1M266 477.5h1M277 477.5h1M289 477.5h1M301 477.5h1M312 477.5h1M324 477.5h1M336 477.5h1M348 477.5h1M359 477.5h1M371 477.5h1M383 477.5h1M394 477.5h1M406 477.5h1M418 477.5h1M430 477.5h1M441 477.5h1M453 477.5h1M465 477.5h1M476 477.5h1M488 477.5h1M500 477.5h1M512 477.5h1M523 477.5h1M535 477.5h1M547 477.5h1M558 477.5h1M570 477.5h1M582 477.5h1M594 477.5h1M605 477.5h1M617 477.5h1M629 477.5h1M640 477.5h1M652 477.5h1M664 477.5h1M675 477.5h1M687 477.5h1M699 477.5h1M711 477.5h1M722 477.5h1M734 477.5h1M746 477.5h1M757 477.5h1M769 477.5h1M781 477.5h1M793 477.5h1M804 477.5h1M816 477.5h1M828 477.5h1M839 477.5h1M851 477.5h1M863 477.5h1M874 477.5h1M8 488.5h1M20 488.5h1M31 488.5h1M43 488.5h1M55 488.5h1M67 488.5h1M78 488.5h1M90 488.5h1M102 488.5h1M113 488.5h1M125 488.5h1M137 488.5h1M149 488.5h1M160 488.5h1M172 488.5h1M184 488.5h1M195 488.5h1M207 488.5h1M219 488.5h1M230 488.5h1M242 488.5h1M254 488.5h1M266 488.5h1M277 488.5h1M289 488.5h1M301 488.5h1M312 488.5h1M324 488.5h1M336 488.5h1M348 488.5h1M359 488.5h1M371 488.5h1M383 488.5h1M394 488.5h1M406 488.5h1M418 488.5h1M430 488.5h1M441 488.5h1M453 488.5h1M465 488.5h1M476 488.5h1M488 488.5h1M500 488.5h1M512 488.5h1M523 488.5h1M535 488.5h1M547 488.5h1M558 488.5h1M570 488.5h1M582 488.5h1M594 488.5h1M605 488.5h1M617 488.5h1M629 488.5h1M640 488.5h1M652 488.5h1M664 488.5h1M675 488.5h1M687 488.5h1M699 488.5h1M711 488.5h1M722 488.5h1M734 488.5h1M746 488.5h1M757 488.5h1M769 488.5h1M781 488.5h1M793 488.5h1M804 488.5h1M816 488.5h1M828 488.5h1M839 488.5h1M851 488.5h1M863 488.5h1M874 488.5h1M8 500.5h1M20 500.5h1M31 500.5h1M43 500.5h1M55 500.5h1M67 500.5h1M78 500.5h1M90 500.5h1M102 500.5h1M113 500.5h1M125 500.5h1M137 500.5h1M149 500.5h1M160 500.5h1M172 500.5h1M184 500.5h1M195 500.5h1M207 500.5h1M219 500.5h1M230 500.5h1M242 500.5h1M254 500.5h1M266 500.5h1M277 500.5h1M289 500.5h1M301 500.5h1M312 500.5h1M324 500.5h1M336 500.5h1M348 500.5h1M359 500.5h1M371 500.5h1M383 500.5h1M394 500.5h1M406 500.5h1M418 500.5h1M430 500.5h1M441 500.5h1M453 500.5h1M465 500.5h1M476 500.5h1M488 500.5h1M500 500.5h1M512 500.5h1M523 500.5h1M535 500.5h1M547 500.5h1M558 500.5h1M570 500.5h1M582 500.5h1M594 500.5h1M605 500.5h1M617 500.5h1M629 500.5h1M640 500.5h1M652 500.5h1M664 500.5h1M675 500.5h1M687 500.5h1M699 500.5h1M711 500.5h1M722 500.5h1M734 500.5h1M746 500.5h1M757 500.5h1M769 500.5h1M781 500.5h1M793 500.5h1M804 500.5h1M816 500.5h1M828 500.5h1M839 500.5h1M851 500.5h1M863 500.5h1M874 500.5h1M8 512.5h1M20 512.5h1M31 512.5h1M43 512.5h1M55 512.5h1M67 512.5h1M78 512.5h1M90 512.5h1M102 512.5h1M113 512.5h1M125 512.5h1M137 512.5h1M149 512.5h1M160 512.5h1M172 512.5h1M184 512.5h1M195 512.5h1M207 512.5h1M219 512.5h1M230 512.5h1M242 512.5h1M254 512.5h1M266 512.5h1M277 512.5h1M289 512.5h1M301 512.5h1M312 512.5h1M324 512.5h1M336 512.5h1M348 512.5h1M359 512.5h1M371 512.5h1M383 512.5h1M394 512.5h1M406 512.5h1M418 512.5h1M430 512.5h1M441 512.5h1M453 512.5h1M465 512.5h1M476 512.5h1M488 512.5h1M500 512.5h1M512 512.5h1M523 512.5h1M535 512.5h1M547 512.5h1M558 512.5h1M570 512.5h1M582 512.5h1M594 512.5h1M605 512.5h1M617 512.5h1M629 512.5h1M640 512.5h1M652 512.5h1M664 512.5h1M675 512.5h1M687 512.5h1M699 512.5h1M711 512.5h1M722 512.5h1M734 512.5h1M746 512.5h1M757 512.5h1M769 512.5h1M781 512.5h1M793 512.5h1M804 512.5h1M816 512.5h1M828 512.5h1M839 512.5h1M851 512.5h1M863 512.5h1M874 512.5h1M8 523.5h1M20 523.5h1M31 523.5h1M43 523.5h1M55 523.5h1M67 523.5h1M78 523.5h1M90 523.5h1M102 523.5h1M113 523.5h1M125 523.5h1M137 523.5h1M149 523.5h1M160 523.5h1M172 523.5h1M184 523.5h1M195 523.5h1M207 523.5h1M219 523.5h1M230 523.5h1M242 523.5h1M254 523.5h1M266 523.5h1M277 523.5h1M289 523.5h1M301 523.5h1M312 523.5h1M324 523.5h1M336 523.5h1M348 523.5h1M359 523.5h1M371 523.5h1M383 523.5h1M394 523.5h1M406 523.5h1M418 523.5h1M430 523.5h1M441 523.5h1M453 523.5h1M465 523.5h1M476 523.5h1M488 523.5h1M500 523.5h1M512 523.5h1M523 523.5h1M535 523.5h1M547 523.5h1M558 523.5h1M570 523.5h1M582 523.5h1M594 523.5h1M605 523.5h1M617 523.5h1M629 523.5h1M640 523.5h1M652 523.5h1M664 523.5h1M675 523.5h1M687 523.5h1M699 523.5h1M711 523.5h1M722 523.5h1M734 523.5h1M746 523.5h1M757 523.5h1M769 523.5h1M781 523.5h1M793 523.5h1M804 523.5h1M816 523.5h1M828 523.5h1M839 523.5h1M851 523.5h1M863 523.5h1M874 523.5h1M8 535.5h1M20 535.5h1M31 535.5h1M43 535.5h1M55 535.5h1M67 535.5h1M78 535.5h1M90 535.5h1M102 535.5h1M113 535.5h1M125 535.5h1M137 535.5h1M149 535.5h1M160 535.5h1M172 535.5h1M184 535.5h1M195 535.5h1M207 535.5h1M219 535.5h1M230 535.5h1M242 535.5h1M254 535.5h1M266 535.5h1M277 535.5h1M289 535.5h1M301 535.5h1M312 535.5h1M324 535.5h1M336 535.5h1M348 535.5h1M359 535.5h1M371 535.5h1M383 535.5h1M394 535.5h1M406 535.5h1M418 535.5h1M430 535.5h1M441 535.5h1M453 535.5h1M465 535.5h1M476 535.5h1M488 535.5h1M500 535.5h1M512 535.5h1M523 535.5h1M535 535.5h1M547 535.5h1M558 535.5h1M570 535.5h1M582 535.5h1M594 535.5h1M605 535.5h1M617 535.5h1M629 535.5h1M640 535.5h1M652 535.5h1M664 535.5h1M675 535.5h1M687 535.5h1M699 535.5h1M711 535.5h1M722 535.5h1M734 535.5h1M746 535.5h1M757 535.5h1M769 535.5h1M781 535.5h1M793 535.5h1M804 535.5h1M816 535.5h1M828 535.5h1M839 535.5h1M851 535.5h1M863 535.5h1M874 535.5h1M8 547.5h1M20 547.5h1M31 547.5h1M43 547.5h1M55 547.5h1M67 547.5h1M78 547.5h1M90 547.5h1M102 547.5h1M113 547.5h1M125 547.5h1M137 547.5h1M149 547.5h1M160 547.5h1M172 547.5h1M184 547.5h1M195 547.5h1M207 547.5h1M219 547.5h1M230 547.5h1M242 547.5h1M254 547.5h1M266 547.5h1M277 547.5h1M289 547.5h1M301 547.5h1M312 547.5h1M324 547.5h1M336 547.5h1M348 547.5h1M359 547.5h1M371 547.5h1M383 547.5h1M394 547.5h1M406 547.5h1M418 547.5h1M430 547.5h1M441 547.5h1M453 547.5h1M465 547.5h1M476 547.5h1M488 547.5h1M500 547.5h1M512 547.5h1M523 547.5h1M535 547.5h1M547 547.5h1M558 547.5h1M570 547.5h1M582 547.5h1M594 547.5h1M605 547.5h1M617 547.5h1M629 547.5h1M640 547.5h1M652 547.5h1M664 547.5h1M675 547.5h1M687 547.5h1M699 547.5h1M711 547.5h1M722 547.5h1M734 547.5h1M746 547.5h1M757 547.5h1M769 547.5h1M781 547.5h1M793 547.5h1M804 547.5h1M816 547.5h1M828 547.5h1M839 547.5h1M851 547.5h1M863 547.5h1M874 547.5h1M8 559.5h1M20 559.5h1M31 559.5h1M43 559.5h1M55 559.5h1M67 559.5h1M78 559.5h1M90 559.5h1M102 559.5h1M113 559.5h1M125 559.5h1M137 559.5h1M149 559.5h1M160 559.5h1M172 559.5h1M184 559.5h1M195 559.5h1M207 559.5h1M219 559.5h1M230 559.5h1M242 559.5h1M254 559.5h1M266 559.5h1M277 559.5h1M289 559.5h1M301 559.5h1M312 559.5h1M324 559.5h1M336 559.5h1M348 559.5h1M359 559.5h1M371 559.5h1M383 559.5h1M394 559.5h1M406 559.5h1M418 559.5h1M430 559.5h1M441 559.5h1M453 559.5h1M465 559.5h1M476 559.5h1M488 559.5h1M500 559.5h1M512 559.5h1M523 559.5h1M535 559.5h1M547 559.5h1M558 559.5h1M570 559.5h1M582 559.5h1M594 559.5h1M605 559.5h1M617 559.5h1M629 559.5h1M640 559.5h1M652 559.5h1M664 559.5h1M675 559.5h1M687 559.5h1M699 559.5h1M711 559.5h1M722 559.5h1M734 559.5h1M746 559.5h1M757 559.5h1M769 559.5h1M781 559.5h1M793 559.5h1M804 559.5h1M816 559.5h1M828 559.5h1M839 559.5h1M851 559.5h1M863 559.5h1M874 559.5h1M8 570.5h1M20 570.5h1M31 570.5h1M43 570.5h1M55 570.5h1M67 570.5h1M78 570.5h1M90 570.5h1M102 570.5h1M113 570.5h1M125 570.5h1M137 570.5h1M149 570.5h1M160 570.5h1M172 570.5h1M184 570.5h1M195 570.5h1M207 570.5h1M219 570.5h1M230 570.5h1M242 570.5h1M254 570.5h1M266 570.5h1M277 570.5h1M289 570.5h1M301 570.5h1M312 570.5h1M324 570.5h1M336 570.5h1M348 570.5h1M359 570.5h1M371 570.5h1M383 570.5h1M394 570.5h1M406 570.5h1M418 570.5h1M430 570.5h1M441 570.5h1M453 570.5h1M465 570.5h1M476 570.5h1M488 570.5h1M500 570.5h1M512 570.5h1M523 570.5h1M535 570.5h1M547 570.5h1M558 570.5h1M570 570.5h1M582 570.5h1M594 570.5h1M605 570.5h1M617 570.5h1M629 570.5h1M640 570.5h1M652 570.5h1M664 570.5h1M675 570.5h1M687 570.5h1M699 570.5h1M711 570.5h1M722 570.5h1M734 570.5h1M746 570.5h1M757 570.5h1M769 570.5h1M781 570.5h1M793 570.5h1M804 570.5h1M816 570.5h1M828 570.5h1M839 570.5h1M851 570.5h1M863 570.5h1M874 570.5h1M8 582.5h1M20 582.5h1M31 582.5h1M43 582.5h1M55 582.5h1M67 582.5h1M78 582.5h1M90 582.5h1M102 582.5h1M113 582.5h1M125 582.5h1M137 582.5h1M149 582.5h1M160 582.5h1M172 582.5h1M184 582.5h1M195 582.5h1M207 582.5h1M219 582.5h1M230 582.5h1M242 582.5h1M254 582.5h1M266 582.5h1M277 582.5h1M289 582.5h1M301 582.5h1M312 582.5h1M324 582.5h1M336 582.5h1M348 582.5h1M359 582.5h1M371 582.5h1M383 582.5h1M394 582.5h1M406 582.5h1M418 582.5h1M430 582.5h1M441 582.5h1M453 582.5h1M465 582.5h1M476 582.5h1M488 582.5h1M500 582.5h1M512 582.5h1M523 582.5h1M535 582.5h1M547 582.5h1M558 582.5h1M570 582.5h1M582 582.5h1M594 582.5h1M605 582.5h1M617 582.5h1M629 582.5h1M640 582.5h1M652 582.5h1M664 582.5h1M675 582.5h1M687 582.5h1M699 582.5h1M711 582.5h1M722 582.5h1M734 582.5h1M746 582.5h1M757 582.5h1M769 582.5h1M781 582.5h1M793 582.5h1M804 582.5h1M816 582.5h1M828 582.5h1M839 582.5h1M851 582.5h1M863 582.5h1M874 582.5h1M8 594.5h1M20 594.5h1M31 594.5h1M43 594.5h1M55 594.5h1M67 594.5h1M78 594.5h1M90 594.5h1M102 594.5h1M113 594.5h1M125 594.5h1M137 594.5h1M149 594.5h1M160 594.5h1M172 594.5h1M184 594.5h1M195 594.5h1M207 594.5h1M219 594.5h1M230 594.5h1M242 594.5h1M254 594.5h1M266 594.5h1M277 594.5h1M289 594.5h1M301 594.5h1M312 594.5h1M324 594.5h1M336 594.5h1M348 594.5h1M359 594.5h1M371 594.5h1M383 594.5h1M394 594.5h1M406 594.5h1M418 594.5h1M430 594.5h1M441 594.5h1M453 594.5h1M465 594.5h1M476 594.5h1M488 594.5h1M500 594.5h1M512 594.5h1M523 594.5h1M535 594.5h1M547 594.5h1M558 594.5h1M570 594.5h1M582 594.5h1M594 594.5h1M605 594.5h1M617 594.5h1M629 594.5h1M640 594.5h1M652 594.5h1M664 594.5h1M675 594.5h1M687 594.5h1M699 594.5h1M711 594.5h1M722 594.5h1M734 594.5h1M746 594.5h1M757 594.5h1M769 594.5h1M781 594.5h1M793 594.5h1M804 594.5h1M816 594.5h1M828 594.5h1M839 594.5h1M851 594.5h1M863 594.5h1M874 594.5h1" stroke="#000" stroke-width="1.3" fill="none"/>
<path d="M184.5 400.5L576.5 400.5M184.5 400.5L184.5 529.5M184.5 558.5L184.5 582.5M254.5 400.5L254.5 412.5M254.5 441.5L254.5 470.5M254.5 459.5L283.5 459.5M254.5 500.5L254.5 517.5M330.5 400.5L330.5 412.5M330.5 441.5L330.5 517.5M330.5 447.5L629.5 447.5M312.5 517.5L342.5 517.5M312.5 517.5L312.5 535.5M312.5 558.5L312.5 570.5M342.5 517.5L342.5 529.5M342.5 558.5L342.5 570.5M312.5 570.5L342.5 570.5M330.5 570.5L330.5 582.5M412.5 400.5L412.5 412.5M412.5 441.5L412.5 517.5M412.5 465.5L629.5 465.5M394.5 517.5L424.5 517.5M394.5 517.5L394.5 535.5M394.5 558.5L394.5 570.5M424.5 517.5L424.5 529.5M424.5 558.5L424.5 570.5M394.5 570.5L424.5 570.5M412.5 570.5L412.5 582.5M494.5 400.5L494.5 412.5M494.5 441.5L494.5 517.5M494.5 482.5L629.5 482.5M476.5 517.5L506.5 517.5M476.5 517.5L476.5 535.5M476.5 558.5L476.5 570.5M506.5 517.5L506.5 529.5M506.5 558.5L506.5 570.5M476.5 570.5L506.5 570.5M494.5 570.5L494.5 582.5M576.5 400.5L576.5 412.5M576.5 441.5L576.5 517.5M576.5 500.5L629.5 500.5M558.5 517.5L588.5 517.5M558.5 517.5L558.5 535.5M558.5 558.5L558.5 570.5M588.5 517.5L588.5 529.5M588.5 558.5L588.5 570.5M558.5 570.5L588.5 570.5M576.5 570.5L576.5 582.5" stroke="#0000ff" stroke-width="1.25" fill="none" stroke-linecap="square"/>
<g stroke="#00009c" stroke-width="1.05" fill="none" stroke-linejoin="round"><circle cx="183.9" cy="544.5" r="11.4"/><path d="M178.3 582.5H190.7L184.5 589.1ZM184.5 529.5V532.8 M184.5 556.2V558.5M181.5 536.5H187.5 M184.5 533.5V539.5 M181.5 551.5H187.5M254.5 412.5 L254.5 415.4 L260.4 418.4 L248.6 424.2 L260.4 430.1 L248.6 435.9 L254.5 438.8 L254.5 441.8M254.5 470.5 L254.5 473.4 L260.4 476.4 L248.6 482.2 L260.4 488.1 L248.6 493.9 L254.5 496.8 L254.5 499.8M248.3 517.5H260.7L254.5 524.1ZM330.5 412.5 L330.5 415.4 L336.4 418.4 L324.6 424.2 L336.4 430.1 L324.6 435.9 L330.5 438.8 L330.5 441.8M312.5 535.5V545.5 M312.5 548.5V558.5 M306.6 545.5H318.4 M306.6 548.5H318.4M342.5 529.5 C348.9 530.5 348.9 538.2 344.0 539.2 C341.5 540.0 338.0 540.4 338.0 539.0 C338.0 537.6 341.5 538.0 344.0 539.2 C348.9 540.1 348.9 547.9 344.0 548.8 C341.5 549.6 338.0 550.0 338.0 548.6 C338.0 547.2 341.5 547.6 344.0 548.8 C348.9 549.8 348.9 557.5 344.0 558.5M324.3 582.5H336.7L330.5 589.1ZM412.5 412.5 L412.5 415.4 L418.4 418.4 L406.6 424.2 L418.4 430.1 L406.6 435.9 L412.5 438.8 L412.5 441.8M394.5 535.5V545.5 M394.5 548.5V558.5 M388.6 545.5H400.4 M388.6 548.5H400.4M424.5 529.5 C430.9 530.5 430.9 538.2 426.0 539.2 C423.5 540.0 420.0 540.4 420.0 539.0 C420.0 537.6 423.5 538.0 426.0 539.2 C430.9 540.1 430.9 547.9 426.0 548.8 C423.5 549.6 420.0 550.0 420.0 548.6 C420.0 547.2 423.5 547.6 426.0 548.8 C430.9 549.8 430.9 557.5 426.0 558.5M406.3 582.5H418.7L412.5 589.1ZM494.5 412.5 L494.5 415.4 L500.4 418.4 L488.6 424.2 L500.4 430.1 L488.6 435.9 L494.5 438.8 L494.5 441.8M476.5 535.5V545.5 M476.5 548.5V558.5 M470.6 545.5H482.4 M470.6 548.5H482.4M506.5 529.5 C512.9 530.5 512.9 538.2 508.0 539.2 C505.5 540.0 502.0 540.4 502.0 539.0 C502.0 537.6 505.5 538.0 508.0 539.2 C512.9 540.1 512.9 547.9 508.0 548.8 C505.5 549.6 502.0 550.0 502.0 548.6 C502.0 547.2 505.5 547.6 508.0 548.8 C512.9 549.8 512.9 557.5 508.0 558.5M488.3 582.5H500.7L494.5 589.1ZM576.5 412.5 L576.5 415.4 L582.4 418.4 L570.6 424.2 L582.4 430.1 L570.6 435.9 L576.5 438.8 L576.5 441.8M558.5 535.5V545.5 M558.5 548.5V558.5 M552.6 545.5H564.4 M552.6 548.5H564.4M588.5 529.5 C594.9 530.5 594.9 538.2 590.0 539.2 C587.5 540.0 584.0 540.4 584.0 539.0 C584.0 537.6 587.5 538.0 590.0 539.2 C594.9 540.1 594.9 547.9 590.0 548.8 C587.5 549.6 584.0 550.0 584.0 548.6 C584.0 547.2 587.5 547.6 590.0 548.8 C594.9 549.8 594.9 557.5 590.0 558.5M570.3 582.5H582.7L576.5 589.1Z"/></g>
<path d="M252.8 398.8h3.4v3.4h-3.4zM252.8 457.8h3.4v3.4h-3.4zM328.8 398.8h3.4v3.4h-3.4zM328.8 445.8h3.4v3.4h-3.4zM328.8 515.8h3.4v3.4h-3.4zM328.8 568.8h3.4v3.4h-3.4zM410.8 398.8h3.4v3.4h-3.4zM410.8 463.8h3.4v3.4h-3.4zM410.8 515.8h3.4v3.4h-3.4zM410.8 568.8h3.4v3.4h-3.4zM492.8 398.8h3.4v3.4h-3.4zM492.8 480.8h3.4v3.4h-3.4zM492.8 515.8h3.4v3.4h-3.4zM492.8 568.8h3.4v3.4h-3.4zM574.8 498.8h3.4v3.4h-3.4zM574.8 515.8h3.4v3.4h-3.4zM574.8 568.8h3.4v3.4h-3.4z" fill="#0000ff"/>
<g font-family="'Liberation Sans',sans-serif" font-weight="bold" font-size="8.7" stroke-width="0.25">
<text x="192.6" y="532.3" fill="#000" stroke="#000" textLength="7.7" lengthAdjust="spacingAndGlyphs">V1</text>
<text x="145.4" y="566.0" fill="#000" stroke="#000" textLength="118.8" lengthAdjust="spacingAndGlyphs">PULSE(-5 5 1µ 0.10µ 0 10m 2m 1)</text>
<text x="173.7" y="594.0" fill="#000" stroke="#000" textLength="37.6" lengthAdjust="spacingAndGlyphs">.tran 0,01m</text>
<text x="261.4" y="424.3" fill="#000" stroke="#000" textLength="8.5" lengthAdjust="spacingAndGlyphs">R4</text>
<text x="261.4" y="437.5" fill="#000" stroke="#000" textLength="18.9" lengthAdjust="spacingAndGlyphs">1Meg</text>
<text x="283.6" y="462.8" fill="#000" stroke="#000" textLength="15.0" lengthAdjust="spacingAndGlyphs">Mp1</text>
<text x="261.4" y="482.8" fill="#000" stroke="#000" textLength="8.5" lengthAdjust="spacingAndGlyphs">R5</text>
<text x="261.4" y="496.0" fill="#000" stroke="#000" textLength="7.8" lengthAdjust="spacingAndGlyphs">5k</text>
<text x="337.5" y="424.3" fill="#000" stroke="#000" textLength="8.5" lengthAdjust="spacingAndGlyphs">R1</text>
<text x="337.5" y="437.5" fill="#000" stroke="#000" textLength="14.9" lengthAdjust="spacingAndGlyphs">100k</text>
<text x="315.6" y="541.4" fill="#000" stroke="#000" textLength="9.4" lengthAdjust="spacingAndGlyphs">C1</text>
<text x="315.6" y="559.0" fill="#000" stroke="#000" textLength="21.6" lengthAdjust="spacingAndGlyphs">1.724n</text>
<text x="349.3" y="541.4" fill="#000" stroke="#000" textLength="7.6" lengthAdjust="spacingAndGlyphs">L1</text>
<text x="349.3" y="556.0" fill="#000" stroke="#000" textLength="15.5" lengthAdjust="spacingAndGlyphs">1.8m</text>
<text x="298.2" y="512.3" fill="#0000c8" stroke="#0000c8" textLength="24.1" lengthAdjust="spacingAndGlyphs">90KHz</text>
<text x="419.5" y="424.3" fill="#000" stroke="#000" textLength="8.5" lengthAdjust="spacingAndGlyphs">R2</text>
<text x="419.5" y="437.5" fill="#000" stroke="#000" textLength="14.9" lengthAdjust="spacingAndGlyphs">100k</text>
<text x="397.6" y="541.4" fill="#000" stroke="#000" textLength="9.4" lengthAdjust="spacingAndGlyphs">C2</text>
<text x="397.6" y="559.0" fill="#000" stroke="#000" textLength="21.6" lengthAdjust="spacingAndGlyphs">1.593n</text>
<text x="431.2" y="541.4" fill="#000" stroke="#000" textLength="8.2" lengthAdjust="spacingAndGlyphs">L2</text>
<text x="431.2" y="556.0" fill="#000" stroke="#000" textLength="19.0" lengthAdjust="spacingAndGlyphs">1.58m</text>
<text x="383.7" y="512.3" fill="#0000c8" stroke="#0000c8" textLength="15.4" lengthAdjust="spacingAndGlyphs">100k</text>
<text x="501.5" y="424.3" fill="#000" stroke="#000" textLength="8.5" lengthAdjust="spacingAndGlyphs">R3</text>
<text x="501.5" y="437.5" fill="#000" stroke="#000" textLength="14.9" lengthAdjust="spacingAndGlyphs">100k</text>
<text x="479.5" y="541.4" fill="#000" stroke="#000" textLength="9.4" lengthAdjust="spacingAndGlyphs">C3</text>
<text x="479.5" y="559.0" fill="#000" stroke="#000" textLength="25.9" lengthAdjust="spacingAndGlyphs">1.4831n</text>
<text x="513.2" y="541.4" fill="#000" stroke="#000" textLength="8.2" lengthAdjust="spacingAndGlyphs">L3</text>
<text x="513.2" y="556.0" fill="#000" stroke="#000" textLength="22.0" lengthAdjust="spacingAndGlyphs">1.4mH</text>
<text x="468.5" y="512.3" fill="#0000c8" stroke="#0000c8" textLength="15.3" lengthAdjust="spacingAndGlyphs">110k</text>
<text x="583.5" y="424.3" fill="#000" stroke="#000" textLength="8.5" lengthAdjust="spacingAndGlyphs">R6</text>
<text x="583.5" y="437.5" fill="#000" stroke="#000" textLength="14.9" lengthAdjust="spacingAndGlyphs">100k</text>
<text x="561.5" y="541.4" fill="#000" stroke="#000" textLength="9.4" lengthAdjust="spacingAndGlyphs">C4</text>
<text x="561.5" y="559.0" fill="#000" stroke="#000" textLength="16.5" lengthAdjust="spacingAndGlyphs">500p</text>
<text x="595.2" y="541.4" fill="#000" stroke="#000" textLength="8.2" lengthAdjust="spacingAndGlyphs">L4</text>
<text x="595.2" y="556.0" fill="#000" stroke="#000" textLength="22.0" lengthAdjust="spacingAndGlyphs">244.8µ</text>
<text x="553.1" y="512.3" fill="#0000c8" stroke="#0000c8" textLength="15.7" lengthAdjust="spacingAndGlyphs">455k</text>
<text x="629.6" y="450.4" fill="#000" stroke="#000" textLength="24.8" lengthAdjust="spacingAndGlyphs">U_SK1</text>
<text x="629.6" y="468.0" fill="#000" stroke="#000" textLength="24.8" lengthAdjust="spacingAndGlyphs">U_SK2</text>
<text x="629.6" y="485.6" fill="#000" stroke="#000" textLength="24.8" lengthAdjust="spacingAndGlyphs">U_SK3</text>
<text x="629.6" y="503.1" fill="#000" stroke="#000" textLength="24.8" lengthAdjust="spacingAndGlyphs">U_SK4</text>
<text x="638.0" y="445.5" fill="#0000ff" stroke="#0000ff" textLength="15.0" lengthAdjust="spacingAndGlyphs">???</text>
</g>
</svg>
</body></html>
